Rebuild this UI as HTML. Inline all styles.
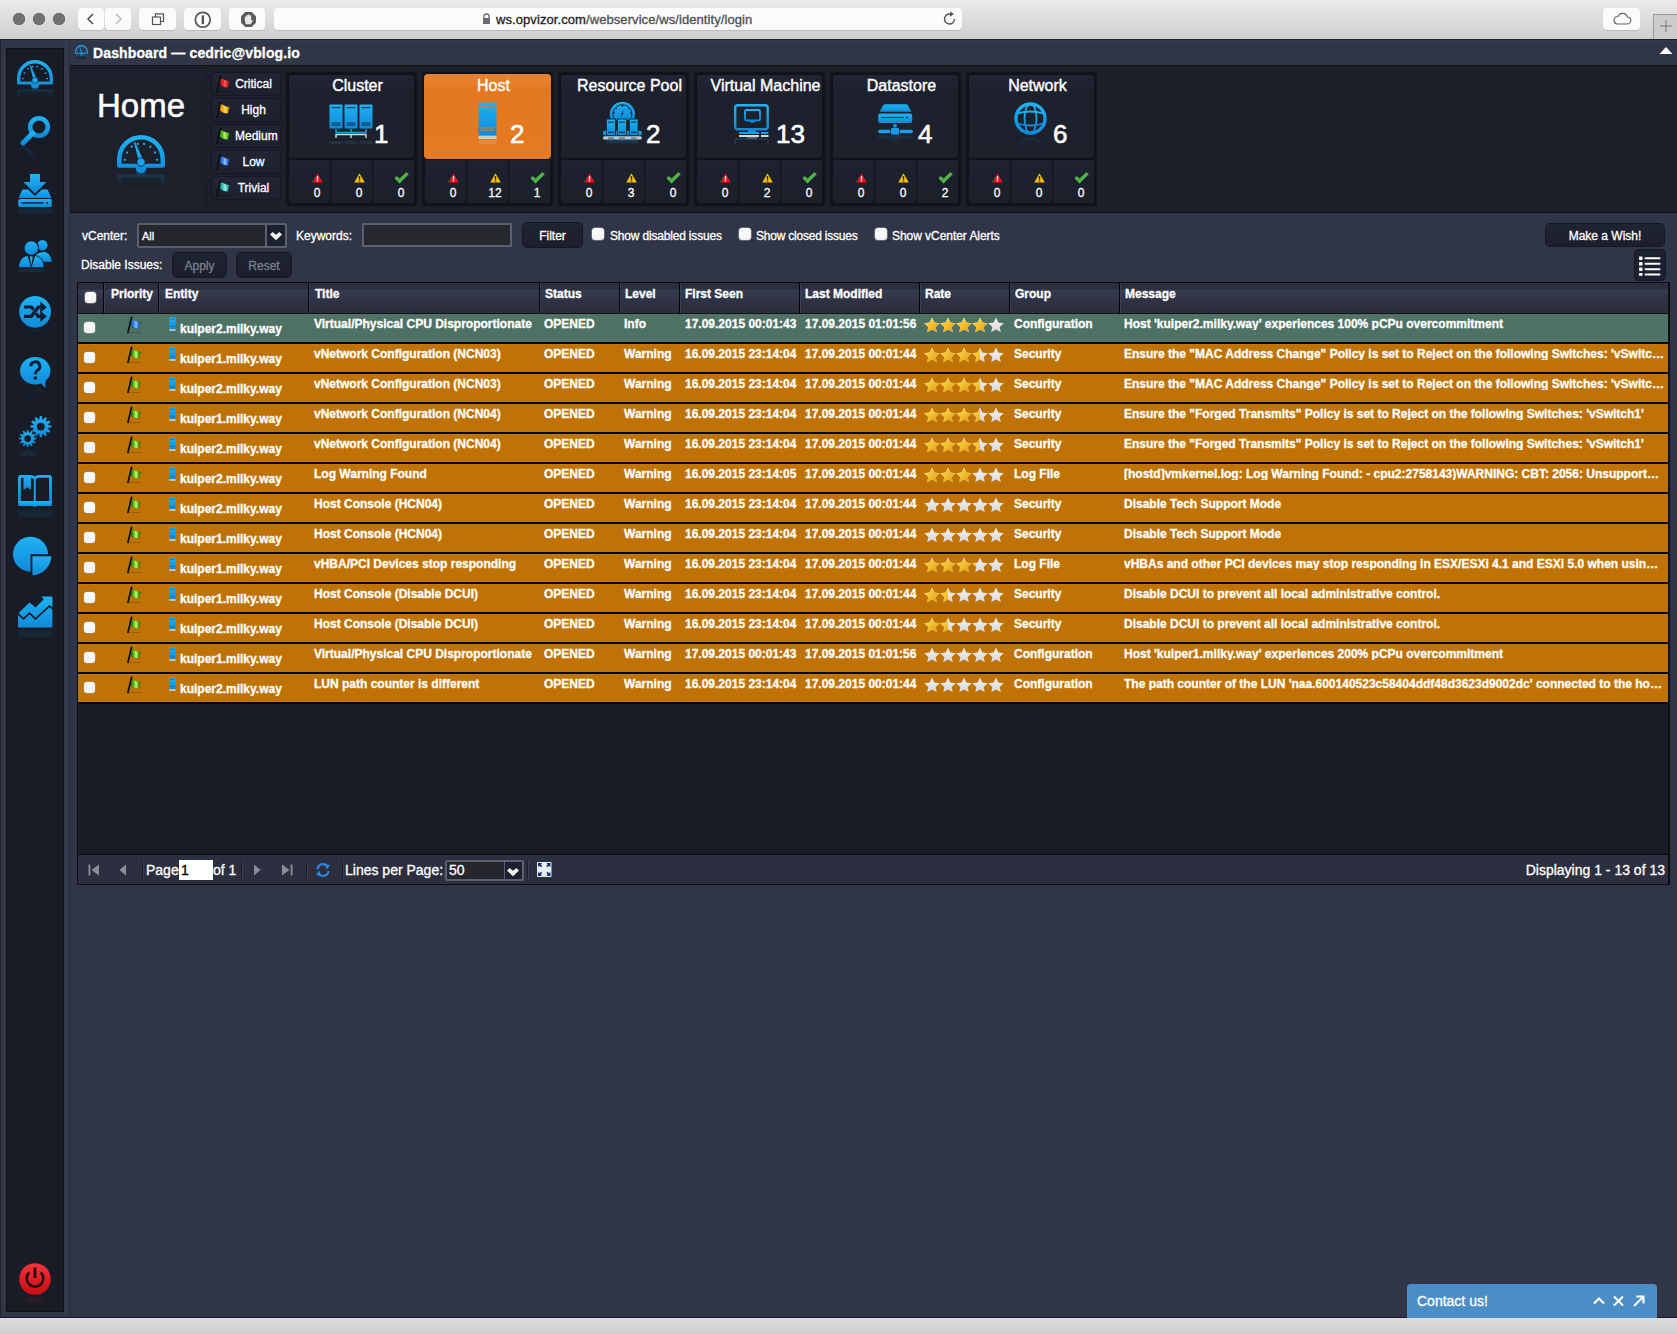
<!DOCTYPE html>
<html><head><meta charset="utf-8"><title>Dashboard</title>
<style>
*{box-sizing:border-box;margin:0;padding:0}
html,body{width:1677px;height:1334px;overflow:hidden}
body{position:relative;background:#303547;font-family:"Liberation Sans",sans-serif;color:#fff}
.a{position:absolute}
svg{position:absolute;overflow:visible}
.t{position:absolute;white-space:nowrap;line-height:1;-webkit-text-stroke:0.3px currentColor}
</style></head><body>
<div class="a" style="left:0;top:0;width:1677px;height:39px;background:linear-gradient(#ebe9eb,#d0cfd0)"></div><div class="a" style="left:13px;top:13px;width:12px;height:12px;border-radius:50%;background:#717073;box-shadow:inset 0 0 0 0.5px #5d5c5f"></div><div class="a" style="left:33px;top:13px;width:12px;height:12px;border-radius:50%;background:#717073;box-shadow:inset 0 0 0 0.5px #5d5c5f"></div><div class="a" style="left:53px;top:13px;width:12px;height:12px;border-radius:50%;background:#717073;box-shadow:inset 0 0 0 0.5px #5d5c5f"></div><div class="a" style="left:78px;top:8px;width:26px;height:22px;border-radius:4px;background:#fbfbfb;box-shadow:0 1px 0 rgba(0,0,0,0.12)"></div><div class="a" style="left:105px;top:8px;width:26px;height:22px;border-radius:4px;background:#fbfbfb;box-shadow:0 1px 0 rgba(0,0,0,0.12)"></div><div class="a" style="left:139px;top:8px;width:37px;height:22px;border-radius:4px;background:#fbfbfb;box-shadow:0 1px 0 rgba(0,0,0,0.12)"></div><div class="a" style="left:184px;top:8px;width:37px;height:22px;border-radius:4px;background:#fbfbfb;box-shadow:0 1px 0 rgba(0,0,0,0.12)"></div><div class="a" style="left:229px;top:8px;width:36px;height:22px;border-radius:4px;background:#fbfbfb;box-shadow:0 1px 0 rgba(0,0,0,0.12)"></div><div class="a" style="left:274px;top:8px;width:688px;height:22px;border-radius:4px;background:#fbfbfb;box-shadow:0 1px 0 rgba(0,0,0,0.12)"></div><div class="a" style="left:1603px;top:8px;width:37px;height:22px;border-radius:4px;background:#fbfbfb;box-shadow:0 1px 0 rgba(0,0,0,0.12)"></div><svg style="left:84px;top:12px" width="14" height="14"><path d="M9 2 L4 7 L9 12" fill="none" stroke="#555" stroke-width="1.6"/></svg><svg style="left:111px;top:12px" width="14" height="14"><path d="M5 2 L10 7 L5 12" fill="none" stroke="#bbb" stroke-width="1.6"/></svg><svg style="left:151px;top:12px" width="16" height="14"><rect x="1.5" y="5" width="8" height="7.5" fill="#fbfbfb" stroke="#555" stroke-width="1.2"/><path d="M4.5 5 V1.8 H12.5 V9.5 H9.5" fill="none" stroke="#555" stroke-width="1.2"/></svg><svg style="left:194px;top:10.5px" width="17.5" height="17.5" viewBox="0 0 16 16"><circle cx="8" cy="8" r="6.8" fill="none" stroke="#555" stroke-width="1.6"/><rect x="7" y="4" width="2.2" height="8" fill="#555"/></svg><svg style="left:239.5px;top:10.5px" width="17" height="17" viewBox="0 0 16 16"><path d="M5 1 H11 L15 5 V11 L11 15 H5 L1 11 V5 Z" fill="#5a5a5a"/><path d="M5.6 12.5 Q4.5 10 4.5 8 V5.5 Q5.3 5 6 5.5 V4 Q6.8 3.4 7.5 4 V3.5 Q8.3 2.9 9 3.5 V4.2 Q9.7 3.7 10.5 4.2 V9 Q11.2 8 12 8.4 Q11.5 11 10 12.5 Z" fill="#e8e8e8"/></svg><svg style="left:482px;top:13px" width="9" height="12"><path d="M2 5 V3.5 A2.5 2.5 0 0 1 7 3.5 V5" fill="none" stroke="#6c6c6c" stroke-width="1.3"/><rect x="1" y="5" width="7" height="6" fill="#6c6c6c"/></svg><div class="t" style="left:496px;top:13px;font-size:13px;letter-spacing:0.08px;color:#1e1e1e">ws.opvizor.com<span style="color:#4d4d4d">/webservice/ws/identity/login</span></div><svg style="left:942px;top:11px" width="16" height="16"><path d="M12.5 8 A5 5 0 1 1 8.5 3.1" fill="none" stroke="#555" stroke-width="1.4"/><path d="M8 0.5 L12 3 L8 5.8 Z" fill="#555"/></svg><svg style="left:1612px;top:12px" width="20" height="14"><path d="M5 12 H15 A3.5 3.5 0 0 0 15.5 5 A5 5 0 0 0 6 4.5 A3.8 3.8 0 0 0 5 12 Z" fill="none" stroke="#666" stroke-width="1.2"/></svg><div class="a" style="left:1653px;top:14px;width:30px;height:25px;background:#cdcccd;border-left:1px solid #9a999a;border-top:1px solid #9a999a"></div><svg style="left:1659px;top:19px" width="14" height="14"><path d="M7 1 V13 M1 7 H13" stroke="#777" stroke-width="1"/></svg><div class="a" style="left:0;top:39px;width:1677px;height:1px;background:#1f2330"></div><div class="a" style="left:0;top:1317px;width:1677px;height:1px;background:#1a1d26"></div><div class="a" style="left:0;top:1318px;width:1677px;height:16px;background:linear-gradient(#dcdcdc,#cfcfcf)"></div><svg width="0" height="0" style="position:absolute;left:0;top:0"><defs>
<linearGradient id="bg" x1="0" y1="0" x2="0" y2="1"><stop offset="0" stop-color="#1fb2f3"/><stop offset="1" stop-color="#108ad9"/></linearGradient>
<linearGradient id="bgr" x1="0" y1="0" x2="0" y2="1"><stop offset="0" stop-color="#1a7fb8" stop-opacity="0.45"/><stop offset="1" stop-color="#1a7fb8" stop-opacity="0"/></linearGradient>
<linearGradient id="rg" x1="0" y1="0" x2="0" y2="1"><stop offset="0" stop-color="#f2333a"/><stop offset="1" stop-color="#c80d14"/></linearGradient>
<linearGradient id="star" x1="0" y1="0" x2="1" y2="1"><stop offset="0" stop-color="#fde256"/><stop offset="0.6" stop-color="#f0b625"/><stop offset="1" stop-color="#e08a10"/></linearGradient>
<linearGradient id="starw" x1="0" y1="0" x2="0" y2="1"><stop offset="0" stop-color="#f4f4f4"/><stop offset="1" stop-color="#d6d6d6"/></linearGradient>
</defs></svg><div class="a" style="left:0;top:40px;width:1px;height:1277px;background:#1e2330"></div><div class="a" style="left:6px;top:48px;width:58px;height:1264px;background:#171c26;border:1px solid #0f1218"></div><svg style="left:17px;top:60px" width="36" height="40.0" viewBox="0 0 36 40"><path d="M0 18 A18 18 0 0 1 36 18 V23 Q36 24.6 34.4 24.6 H22 A4 4 0 0 1 14 24.6 H1.6 Q0 24.6 0 23 Z M3.4 18 A14.6 14.6 0 0 1 32.6 18 V21.6 H3.4 Z" fill="url(#bg)" fill-rule="evenodd"/><g fill="#1fa5ee"><rect x="5.1" y="17.9" width="1.7" height="1.3"/><rect x="29.2" y="17.9" width="1.7" height="1.3"/><rect x="6.7" y="12.4" width="1.6" height="1.5"/><rect x="27.7" y="12.4" width="1.6" height="1.5"/><rect x="10.2" y="8" width="1.6" height="1.5"/><rect x="24.2" y="8" width="1.6" height="1.5"/><rect x="14.9" y="5.9" width="1.6" height="1.5"/><rect x="19.5" y="5.9" width="1.6" height="1.5"/></g><path d="M12.6 5.4 L13.6 5.1 L19.6 18.6 L16.4 19.6 Z" fill="#1fa5ee"/><circle cx="18" cy="20.3" r="3.1" fill="#1fa5ee" stroke="#171c26" stroke-width="0.6"/><linearGradient id="gr17" x1="0" y1="0" x2="0" y2="1"><stop offset="0" stop-color="#1a8fd0" stop-opacity="0.3"/><stop offset="1" stop-color="#1a8fd0" stop-opacity="0"/></linearGradient><path d="M14 29.6 A4 4 0 0 1 22 29.6 H34.4 Q36 29.6 36 31.2 V38 H0 V31.2 Q0 29.6 1.6 29.6 Z" fill="url(#gr17)"/><path d="M3.4 31.6 H32.6 V38 H3.4 Z" fill="#171c26" opacity="0.6"/></svg><svg style="left:19px;top:115px" width="34" height="46" viewBox="0 0 34 46"><circle cx="20" cy="12" r="8.8" fill="none" stroke="url(#bg)" stroke-width="4.6"/><path d="M13.5 18.5 L4 28" stroke="url(#bg)" stroke-width="5.2" stroke-linecap="round"/><path d="M4 31 L13 39" stroke="#1a6fa0" stroke-width="4" stroke-linecap="round" opacity="0.12"/></svg><svg style="left:18px;top:174px" width="34" height="46" viewBox="0 0 34 46"><path d="M12 0 H22 V8 H28.5 L17 19.5 L5.5 8 H12 Z" fill="url(#bg)"/><path d="M4.5 15.5 H10 L17 22 L24 15.5 H29.5 L33.5 24 H0.5 Z" fill="url(#bg)"/><rect x="0.3" y="25" width="33.4" height="8" rx="1.5" fill="url(#bg)"/><rect x="3.5" y="28.2" width="22" height="1.5" fill="#0d2a44"/><rect x="28" y="28.2" width="2" height="1.5" fill="#0d2a44"/><rect x="0.3" y="34.5" width="33.4" height="5" rx="1.5" fill="#1a7fb8" opacity="0.12"/></svg><svg style="left:18px;top:239px" width="35" height="42" viewBox="0 0 35 42"><circle cx="24.4" cy="6.2" r="5.2" fill="url(#bg)"/><path d="M18 15.5 Q22 12.8 26 13 Q32.5 13.5 33.8 22.8 H19 Z" fill="url(#bg)"/><circle cx="13.3" cy="8.9" r="7.3" fill="url(#bg)" stroke="#171c26" stroke-width="1.1"/><path d="M0.2 28.7 Q1 18 9.8 16.2 L13.3 27.5 L16.8 16.2 Q25.6 18 26.4 28.7 Z" fill="url(#bg)" stroke="#171c26" stroke-width="1"/><path d="M11.9 17.2 H14.7 L14.5 20 L13.3 26.5 L12.1 20 Z" fill="#22a8ee"/><path d="M0.2 29.5 H26.4 V33 H0.2 Z" fill="#1a8fd0" opacity="0.12"/></svg><svg style="left:19px;top:296px" width="33" height="44" viewBox="0 0 33 44"><circle cx="16.1" cy="15.8" r="15.9" fill="url(#bg)"/><path d="M5 20.3 H12.3 L19.3 11.2 H22.5" fill="none" stroke="#0c1e30" stroke-width="3.2" stroke-linejoin="miter"/><path d="M21.3 5.6 L27.8 11.2 L21.3 16.8 Z" fill="#0c1e30"/><path d="M14.6 13.6 L12.4 11 H5" fill="none" stroke="#0c1e30" stroke-width="3.2"/><path d="M17 17.6 L19.2 20.3 H22.5" fill="none" stroke="#0c1e30" stroke-width="3.2"/><path d="M21.3 14.7 L27.8 20.3 L21.3 25.9 Z" fill="#0c1e30"/><path d="M5 39 A12 8 0 0 1 27 39" fill="none" stroke="#1a8fd0" stroke-width="3" opacity="0.06"/></svg><svg style="left:20px;top:357px" width="32" height="42" viewBox="0 0 32 42"><ellipse cx="15.2" cy="13.8" rx="15.2" ry="13.8" fill="url(#bg)"/><path d="M20 25 L25.3 31 L25.5 22 Z" fill="#1a8ee0"/><path d="M10.8 9.3 A4.5 4.5 0 1 1 17.2 13.4 Q15.3 14.6 15.3 17.2" fill="none" stroke="#0c1e30" stroke-width="3"/><circle cx="15.3" cy="21.1" r="1.8" fill="#0c1e30"/><path d="M6 39 Q15 32 25 35" fill="none" stroke="#1a8fd0" stroke-width="3" opacity="0.06"/></svg><svg style="left:16px;top:413px" width="38" height="50" viewBox="0 0 38 50"><path d="M32.25 12.10 L35.35 12.60 L35.35 14.60 L32.25 15.10 L32.00 16.02 L34.44 18.01 L33.44 19.74 L30.50 18.63 L29.83 19.30 L30.94 22.24 L29.21 23.24 L27.22 20.80 L26.30 21.05 L25.80 24.15 L23.80 24.15 L23.30 21.05 L22.38 20.80 L20.39 23.24 L18.66 22.24 L19.77 19.30 L19.10 18.63 L16.16 19.74 L15.16 18.01 L17.60 16.02 L17.35 15.10 L14.25 14.60 L14.25 12.60 L17.35 12.10 L17.60 11.18 L15.16 9.19 L16.16 7.46 L19.10 8.57 L19.77 7.90 L18.66 4.96 L20.39 3.96 L22.38 6.40 L23.30 6.15 L23.80 3.05 L25.80 3.05 L26.30 6.15 L27.22 6.40 L29.21 3.96 L30.94 4.96 L29.83 7.90 L30.50 8.57 L33.44 7.46 L34.44 9.19 L32.00 11.18 Z M28.7 13.6 A3.9 3.9 0 1 0 20.900000000000002 13.6 A3.9 3.9 0 1 0 28.7 13.6 Z" fill="url(#bg)" fill-rule="evenodd"/><path d="M18.17 24.30 L20.64 24.57 L20.64 26.63 L18.17 26.90 L17.96 27.71 L19.96 29.17 L18.93 30.97 L16.65 29.96 L16.06 30.55 L17.07 32.83 L15.27 33.86 L13.81 31.86 L13.00 32.07 L12.73 34.54 L10.67 34.54 L10.40 32.07 L9.59 31.86 L8.13 33.86 L6.33 32.83 L7.34 30.55 L6.75 29.96 L4.47 30.97 L3.44 29.17 L5.44 27.71 L5.23 26.90 L2.76 26.63 L2.76 24.57 L5.23 24.30 L5.44 23.49 L3.44 22.03 L4.47 20.23 L6.75 21.24 L7.34 20.65 L6.33 18.37 L8.13 17.34 L9.59 19.34 L10.40 19.13 L10.67 16.66 L12.73 16.66 L13.00 19.13 L13.81 19.34 L15.27 17.34 L17.07 18.37 L16.06 20.65 L16.65 21.24 L18.93 20.23 L19.96 22.03 L17.96 23.49 Z M14.7 25.6 A3.0 3.0 0 1 0 8.7 25.6 A3.0 3.0 0 1 0 14.7 25.6 Z" fill="url(#bg)" fill-rule="evenodd" stroke="#171c26" stroke-width="0.8"/><clipPath id="gclip"><rect x="0" y="35" width="38" height="9"/></clipPath><g clip-path="url(#gclip)" opacity="0.13"><path d="M18.17 24.30 L20.64 24.57 L20.64 26.63 L18.17 26.90 L17.96 27.71 L19.96 29.17 L18.93 30.97 L16.65 29.96 L16.06 30.55 L17.07 32.83 L15.27 33.86 L13.81 31.86 L13.00 32.07 L12.73 34.54 L10.67 34.54 L10.40 32.07 L9.59 31.86 L8.13 33.86 L6.33 32.83 L7.34 30.55 L6.75 29.96 L4.47 30.97 L3.44 29.17 L5.44 27.71 L5.23 26.90 L2.76 26.63 L2.76 24.57 L5.23 24.30 L5.44 23.49 L3.44 22.03 L4.47 20.23 L6.75 21.24 L7.34 20.65 L6.33 18.37 L8.13 17.34 L9.59 19.34 L10.40 19.13 L10.67 16.66 L12.73 16.66 L13.00 19.13 L13.81 19.34 L15.27 17.34 L17.07 18.37 L16.06 20.65 L16.65 21.24 L18.93 20.23 L19.96 22.03 L17.96 23.49 Z M14.7 25.6 A3.0 3.0 0 1 0 8.7 25.6 A3.0 3.0 0 1 0 14.7 25.6 Z" fill="#1a8fd0" fill-rule="evenodd" transform="translate(0,70.6) scale(1,-1)"/></g></svg><svg style="left:18px;top:475px" width="34" height="44" viewBox="0 0 34 44"><path d="M1.4 27 V2.6 Q1.4 1.4 2.6 1.4 H12.5 Q14.8 1.4 16.8 3.2 Q18.8 1.4 21.2 1.4 H31.3 Q32.5 1.4 32.5 2.6 V27" fill="none" stroke="url(#bg)" stroke-width="2.8"/><rect x="15.8" y="2.8" width="2" height="24" fill="#1a9be6"/><path d="M5.5 0.2 H13 V15 L9.25 12.2 L5.5 15 Z" fill="url(#bg)"/><path d="M0.2 26 H33.8 V29.8 Q33.8 31.1 32.5 31.1 H19.5 Q16.8 32.6 14.1 31.1 H1.5 Q0.2 31.1 0.2 29.8 Z" fill="url(#bg)"/><rect x="0.2" y="35" width="33.6" height="7" fill="#1a8fd0" opacity="0.09"/></svg><svg style="left:12px;top:536px" width="42" height="42" viewBox="0 0 42 42"><path d="M18.5 18.2 V35.7 A17.5 17.5 0 1 1 36 18.2 Z" fill="url(#bg)"/><path d="M19.8 19.6 H40 A20.3 20.3 0 0 1 19.8 39.9 Z" fill="url(#bg)" stroke="#171c26" stroke-width="1.2"/></svg><svg style="left:18px;top:596px" width="36" height="44" viewBox="0 0 36 44"><path d="M0 18.3 L0.9 16.8 L11.5 6.4 L17.5 11.4 L25.8 3.3 L23.3 0.5 H33.4 Q34.4 0.5 34.4 1.5 V30.5 Q34.4 31.5 33.4 31.5 H1 Q0 31.5 0 30.5 Z" fill="url(#bg)"/><path d="M-0.5 17.4 L5.5 22.8 L11.5 17.1 L17.5 22.8 L31.4 10.1 L35 13" fill="none" stroke="#171c26" stroke-width="1.7"/><rect x="0" y="34" width="34.4" height="7" fill="#1a8fd0" opacity="0.09"/></svg><svg style="left:19px;top:1263px" width="32" height="44" viewBox="0 0 32 44"><circle cx="16" cy="16" r="15.8" fill="url(#rg)"/><path d="M10.2 9.5 A8.3 8.3 0 1 0 21.8 9.5" fill="none" stroke="#2a0a0c" stroke-width="2.6"/><path d="M16 4.5 V15" stroke="#2a0a0c" stroke-width="2.8"/><ellipse cx="16" cy="37" rx="11" ry="3.5" fill="#b01018" opacity="0.12"/></svg><div class="a" style="left:70px;top:40px;width:1607px;height:25px;background:linear-gradient(#323b4c,#303648 3px,#313749)"></div><div class="a" style="left:64px;top:40px;width:5px;height:1277px;background:#343a4b"></div><div class="a" style="left:69px;top:40px;width:1px;height:1277px;background:#292e3b"></div><svg style="left:75px;top:45px" width="13" height="14.444444444444445" viewBox="0 0 36 40"><path d="M0 18 A18 18 0 0 1 36 18 V23 Q36 24.6 34.4 24.6 H22 A4 4 0 0 1 14 24.6 H1.6 Q0 24.6 0 23 Z M3.4 18 A14.6 14.6 0 0 1 32.6 18 V21.6 H3.4 Z" fill="url(#bg)" fill-rule="evenodd"/><g fill="#1fa5ee"><rect x="5.1" y="17.9" width="1.7" height="1.3"/><rect x="29.2" y="17.9" width="1.7" height="1.3"/><rect x="6.7" y="12.4" width="1.6" height="1.5"/><rect x="27.7" y="12.4" width="1.6" height="1.5"/><rect x="10.2" y="8" width="1.6" height="1.5"/><rect x="24.2" y="8" width="1.6" height="1.5"/><rect x="14.9" y="5.9" width="1.6" height="1.5"/><rect x="19.5" y="5.9" width="1.6" height="1.5"/></g><path d="M12.6 5.4 L13.6 5.1 L19.6 18.6 L16.4 19.6 Z" fill="#1fa5ee"/><circle cx="18" cy="20.3" r="3.1" fill="#1fa5ee" stroke="#171c26" stroke-width="0.6"/><linearGradient id="gr75" x1="0" y1="0" x2="0" y2="1"><stop offset="0" stop-color="#1a8fd0" stop-opacity="0.3"/><stop offset="1" stop-color="#1a8fd0" stop-opacity="0"/></linearGradient><path d="M14 29.6 A4 4 0 0 1 22 29.6 H34.4 Q36 29.6 36 31.2 V38 H0 V31.2 Q0 29.6 1.6 29.6 Z" fill="url(#gr75)"/><path d="M3.4 31.6 H32.6 V38 H3.4 Z" fill="#171c26" opacity="0.6"/></svg><div class="t" style="left:93px;top:46px;font-size:14px;font-weight:bold;letter-spacing:0.13px;color:#fff">Dashboard — cedric@vblog.io</div><svg style="left:1659px;top:46px" width="14" height="9"><path d="M0.5 8 L7 1 L13.5 8 Z" fill="#fff"/></svg><div class="a" style="left:70px;top:65px;width:1607px;height:1px;background:#141519"></div><div class="a" style="left:70px;top:66px;width:1607px;height:147px;background:#1b202a"></div><div class="a" style="left:70px;top:212px;width:1607px;height:1px;background:#121316"></div><div class="a" style="left:71px;top:68px;width:134px;height:143px;border-radius:3px;background:linear-gradient(#1f2330,#1e222e 12px,#1c202b 13px,#1d212c);box-shadow:0 0 0 1px #181b24"></div><div class="t" style="left:97px;top:89px;font-size:33px;color:#fff;-webkit-text-stroke:0.5px #fff">Home</div><svg style="left:117px;top:135px" width="48" height="53.333333333333336" viewBox="0 0 36 40"><path d="M0 18 A18 18 0 0 1 36 18 V23 Q36 24.6 34.4 24.6 H22 A4 4 0 0 1 14 24.6 H1.6 Q0 24.6 0 23 Z M3.4 18 A14.6 14.6 0 0 1 32.6 18 V21.6 H3.4 Z" fill="url(#bg)" fill-rule="evenodd"/><g fill="#1fa5ee"><rect x="5.1" y="17.9" width="1.7" height="1.3"/><rect x="29.2" y="17.9" width="1.7" height="1.3"/><rect x="6.7" y="12.4" width="1.6" height="1.5"/><rect x="27.7" y="12.4" width="1.6" height="1.5"/><rect x="10.2" y="8" width="1.6" height="1.5"/><rect x="24.2" y="8" width="1.6" height="1.5"/><rect x="14.9" y="5.9" width="1.6" height="1.5"/><rect x="19.5" y="5.9" width="1.6" height="1.5"/></g><path d="M12.6 5.4 L13.6 5.1 L19.6 18.6 L16.4 19.6 Z" fill="#1fa5ee"/><circle cx="18" cy="20.3" r="3.1" fill="#1fa5ee" stroke="#171c26" stroke-width="0.6"/><linearGradient id="gr117" x1="0" y1="0" x2="0" y2="1"><stop offset="0" stop-color="#1a8fd0" stop-opacity="0.3"/><stop offset="1" stop-color="#1a8fd0" stop-opacity="0"/></linearGradient><path d="M14 29.6 A4 4 0 0 1 22 29.6 H34.4 Q36 29.6 36 31.2 V38 H0 V31.2 Q0 29.6 1.6 29.6 Z" fill="url(#gr117)"/><path d="M3.4 31.6 H32.6 V38 H3.4 Z" fill="#171c26" opacity="0.6"/></svg><div class="a" style="left:212px;top:73px;width:68px;height:22px;border-radius:4px;background:linear-gradient(#212533,#1d212d);box-shadow:0 0 0 1px #151820"></div><svg style="left:216px;top:76px" width="14" height="16" viewBox="0 0 14 16"><defs><linearGradient id="fl216_76" x1="0" y1="0" x2="1" y2="0"><stop offset="0" stop-color="#a01018"/><stop offset="0.35" stop-color="#e82818"/><stop offset="0.55" stop-color="#ff6a6a"/><stop offset="0.7" stop-color="#e82818"/><stop offset="1" stop-color="#a01018"/></linearGradient></defs><path d="M0 15.6 H14" stroke="#000" stroke-width="1" opacity="0.18"/><path d="M4.6 0.3 L1 15.3" stroke="#0d0f12" stroke-width="1.7" stroke-linecap="round"/><path d="M4.8 1.9 Q7.5 2.8 9.7 4.2 L13.6 5.1 L11.8 11.7 L8 11 Q5.5 10 3.7 8.5 Z" fill="url(#fl216_76)" stroke="#000" stroke-opacity="0.25" stroke-width="0.5"/></svg><div class="t" style="left:230px;top:78px;width:47px;text-align:center;font-size:12px;color:#fff">Critical</div><div class="a" style="left:212px;top:99px;width:68px;height:22px;border-radius:4px;background:linear-gradient(#212533,#1d212d);box-shadow:0 0 0 1px #151820"></div><svg style="left:216px;top:102px" width="14" height="16" viewBox="0 0 14 16"><defs><linearGradient id="fl216_102" x1="0" y1="0" x2="1" y2="0"><stop offset="0" stop-color="#d07a00"/><stop offset="0.35" stop-color="#ffb400"/><stop offset="0.55" stop-color="#ffe080"/><stop offset="0.7" stop-color="#ffb400"/><stop offset="1" stop-color="#d07a00"/></linearGradient></defs><path d="M0 15.6 H14" stroke="#000" stroke-width="1" opacity="0.18"/><path d="M4.6 0.3 L1 15.3" stroke="#0d0f12" stroke-width="1.7" stroke-linecap="round"/><path d="M4.8 1.9 Q7.5 2.8 9.7 4.2 L13.6 5.1 L11.8 11.7 L8 11 Q5.5 10 3.7 8.5 Z" fill="url(#fl216_102)" stroke="#000" stroke-opacity="0.25" stroke-width="0.5"/></svg><div class="t" style="left:230px;top:104px;width:47px;text-align:center;font-size:12px;color:#fff">High</div><div class="a" style="left:212px;top:125px;width:68px;height:22px;border-radius:4px;background:linear-gradient(#212533,#1d212d);box-shadow:0 0 0 1px #151820"></div><svg style="left:216px;top:128px" width="14" height="16" viewBox="0 0 14 16"><defs><linearGradient id="fl216_128" x1="0" y1="0" x2="1" y2="0"><stop offset="0" stop-color="#2c8a10"/><stop offset="0.35" stop-color="#70d020"/><stop offset="0.55" stop-color="#b8f080"/><stop offset="0.7" stop-color="#70d020"/><stop offset="1" stop-color="#2c8a10"/></linearGradient></defs><path d="M0 15.6 H14" stroke="#000" stroke-width="1" opacity="0.18"/><path d="M4.6 0.3 L1 15.3" stroke="#0d0f12" stroke-width="1.7" stroke-linecap="round"/><path d="M4.8 1.9 Q7.5 2.8 9.7 4.2 L13.6 5.1 L11.8 11.7 L8 11 Q5.5 10 3.7 8.5 Z" fill="url(#fl216_128)" stroke="#000" stroke-opacity="0.25" stroke-width="0.5"/></svg><div class="t" style="left:235px;top:130px;font-size:12px;color:#fff">Medium</div><div class="a" style="left:212px;top:151px;width:68px;height:22px;border-radius:4px;background:linear-gradient(#212533,#1d212d);box-shadow:0 0 0 1px #151820"></div><svg style="left:216px;top:154px" width="14" height="16" viewBox="0 0 14 16"><defs><linearGradient id="fl216_154" x1="0" y1="0" x2="1" y2="0"><stop offset="0" stop-color="#1a4cb0"/><stop offset="0.35" stop-color="#3a8af0"/><stop offset="0.55" stop-color="#90c8ff"/><stop offset="0.7" stop-color="#3a8af0"/><stop offset="1" stop-color="#1a4cb0"/></linearGradient></defs><path d="M0 15.6 H14" stroke="#000" stroke-width="1" opacity="0.18"/><path d="M4.6 0.3 L1 15.3" stroke="#0d0f12" stroke-width="1.7" stroke-linecap="round"/><path d="M4.8 1.9 Q7.5 2.8 9.7 4.2 L13.6 5.1 L11.8 11.7 L8 11 Q5.5 10 3.7 8.5 Z" fill="url(#fl216_154)" stroke="#000" stroke-opacity="0.25" stroke-width="0.5"/></svg><div class="t" style="left:230px;top:156px;width:47px;text-align:center;font-size:12px;color:#fff">Low</div><div class="a" style="left:212px;top:177px;width:68px;height:22px;border-radius:4px;background:linear-gradient(#212533,#1d212d);box-shadow:0 0 0 1px #151820"></div><svg style="left:216px;top:180px" width="14" height="16" viewBox="0 0 14 16"><defs><linearGradient id="fl216_180" x1="0" y1="0" x2="1" y2="0"><stop offset="0" stop-color="#108080"/><stop offset="0.35" stop-color="#40d0c8"/><stop offset="0.55" stop-color="#a0f0f0"/><stop offset="0.7" stop-color="#40d0c8"/><stop offset="1" stop-color="#108080"/></linearGradient></defs><path d="M0 15.6 H14" stroke="#000" stroke-width="1" opacity="0.18"/><path d="M4.6 0.3 L1 15.3" stroke="#0d0f12" stroke-width="1.7" stroke-linecap="round"/><path d="M4.8 1.9 Q7.5 2.8 9.7 4.2 L13.6 5.1 L11.8 11.7 L8 11 Q5.5 10 3.7 8.5 Z" fill="url(#fl216_180)" stroke="#000" stroke-opacity="0.25" stroke-width="0.5"/></svg><div class="t" style="left:230px;top:182px;width:47px;text-align:center;font-size:12px;color:#fff">Trivial</div><div class="a" style="left:286px;top:72px;width:131px;height:134px;background:#10131a;border-radius:2px"></div><div class="a" style="left:289px;top:75px;width:125px;height:83px;border-radius:3px;background:linear-gradient(#212533,#1f2330 13px,#1d212d 14px,#1d212c)"></div><div class="t" style="left:292px;top:78px;width:131px;text-align:center;font-size:16px;color:#fff;-webkit-text-stroke:0.4px #fff">Cluster</div><svg style="left:329px;top:104px" width="44" height="44" viewBox="0 0 44 44"><g fill="url(#bg)"><rect x="0.5" y="0.5" width="13" height="24" rx="1"/><rect x="15.5" y="0.5" width="13" height="24" rx="1"/><rect x="30.5" y="0.5" width="13" height="24" rx="1"/></g><g fill="#0f3a5c"><rect x="2.5" y="3" width="9" height="1.2"/><rect x="17.5" y="3" width="9" height="1.2"/><rect x="32.5" y="3" width="9" height="1.2"/><rect x="2.5" y="18.5" width="9" height="1.2"/><rect x="17.5" y="18.5" width="9" height="1.2"/><rect x="32.5" y="18.5" width="9" height="1.2"/><rect x="2.5" y="20.5" width="9" height="1.2"/><rect x="17.5" y="20.5" width="9" height="1.2"/><rect x="32.5" y="20.5" width="9" height="1.2"/></g><path d="M7 25 V28.5 H37 V25 M22 25 V28.5" fill="none" stroke="#1a9de6" stroke-width="1.4"/><path d="M7 34 V30.5 H37 V34 M22 30.5 V34" fill="none" stroke="#c9dde6" stroke-width="1.4"/><g fill="#2a3a48" opacity="0.6"><rect x="0.5" y="37" width="13" height="3"/><rect x="15.5" y="37" width="13" height="3"/><rect x="30.5" y="37" width="13" height="3"/></g></svg><div class="t" style="left:374px;top:121px;font-size:26px;color:#fff;-webkit-text-stroke:0.6px #fff">1</div><div class="a" style="left:289px;top:160px;width:41px;height:43px;border-radius:3px;background:linear-gradient(#1f2330,#1d212d 12px,#1c202b)"></div><svg style="left:312px;top:173px" width="11" height="10" viewBox="0 0 11 10"><path d="M5.5 0.3 L10.8 9.6 H0.2 Z" fill="#e8141a"/><rect x="4.8" y="3" width="1.4" height="3.6" fill="#fff"/><rect x="4.8" y="7.3" width="1.4" height="1.3" fill="#fff"/></svg><div class="t" style="left:297px;top:187px;width:40px;text-align:center;font-size:12px;color:#fff">0</div><div class="a" style="left:331px;top:160px;width:41px;height:43px;border-radius:3px;background:linear-gradient(#1f2330,#1d212d 12px,#1c202b)"></div><svg style="left:354px;top:173px" width="11" height="10" viewBox="0 0 11 10"><path d="M5.5 0.3 L10.8 9.6 H0.2 Z" fill="#f5c000"/><rect x="4.8" y="3" width="1.4" height="3.6" fill="#222"/><rect x="4.8" y="7.3" width="1.4" height="1.3" fill="#222"/></svg><div class="t" style="left:339px;top:187px;width:40px;text-align:center;font-size:12px;color:#fff">0</div><div class="a" style="left:373px;top:160px;width:41px;height:43px;border-radius:3px;background:linear-gradient(#1f2330,#1d212d 12px,#1c202b)"></div><svg style="left:394px;top:172px" width="15" height="12" viewBox="0 0 15 12"><path d="M0.5 6.2 L2.8 4 L5.5 6.6 L12.5 0 L14.8 2.2 L5.5 11.5 Z" fill="#4fb24a"/></svg><div class="t" style="left:381px;top:187px;width:40px;text-align:center;font-size:12px;color:#fff">0</div><div class="a" style="left:422px;top:72px;width:131px;height:134px;background:#10131a;border-radius:2px"></div><div class="a" style="left:424px;top:74px;width:127px;height:85px;border-radius:4px;background:linear-gradient(#e8812f,#e67e29 12px,#e37820 13px,#e57a24)"></div><div class="t" style="left:428px;top:78px;width:131px;text-align:center;font-size:16px;color:#fff;-webkit-text-stroke:0.4px #fff">Host</div><svg style="left:478px;top:102px" width="19" height="44" viewBox="0 0 19 44"><rect x="0.5" y="0.5" width="18" height="32.5" rx="1" fill="url(#bg)"/><g fill="#e57a24"><rect x="2.5" y="4.3" width="14" height="1.5"/><rect x="2.5" y="25.5" width="14" height="1"/><rect x="2.5" y="27.7" width="14" height="1"/></g><rect x="0.5" y="34" width="18" height="3" fill="#bfe6f0" opacity="0.8"/><rect x="2.5" y="37" width="14" height="1" fill="#e57a24"/><rect x="0.5" y="38" width="18" height="4" fill="#f0a060" opacity="0.4"/></svg><div class="t" style="left:510px;top:121px;font-size:26px;color:#fff;-webkit-text-stroke:0.6px #fff">2</div><div class="a" style="left:425px;top:160px;width:41px;height:43px;border-radius:3px;background:linear-gradient(#1f2330,#1d212d 12px,#1c202b)"></div><svg style="left:448px;top:173px" width="11" height="10" viewBox="0 0 11 10"><path d="M5.5 0.3 L10.8 9.6 H0.2 Z" fill="#e8141a"/><rect x="4.8" y="3" width="1.4" height="3.6" fill="#fff"/><rect x="4.8" y="7.3" width="1.4" height="1.3" fill="#fff"/></svg><div class="t" style="left:433px;top:187px;width:40px;text-align:center;font-size:12px;color:#fff">0</div><div class="a" style="left:467px;top:160px;width:41px;height:43px;border-radius:3px;background:linear-gradient(#1f2330,#1d212d 12px,#1c202b)"></div><svg style="left:490px;top:173px" width="11" height="10" viewBox="0 0 11 10"><path d="M5.5 0.3 L10.8 9.6 H0.2 Z" fill="#f5c000"/><rect x="4.8" y="3" width="1.4" height="3.6" fill="#222"/><rect x="4.8" y="7.3" width="1.4" height="1.3" fill="#222"/></svg><div class="t" style="left:475px;top:187px;width:40px;text-align:center;font-size:12px;color:#fff">12</div><div class="a" style="left:509px;top:160px;width:41px;height:43px;border-radius:3px;background:linear-gradient(#1f2330,#1d212d 12px,#1c202b)"></div><svg style="left:530px;top:172px" width="15" height="12" viewBox="0 0 15 12"><path d="M0.5 6.2 L2.8 4 L5.5 6.6 L12.5 0 L14.8 2.2 L5.5 11.5 Z" fill="#4fb24a"/></svg><div class="t" style="left:517px;top:187px;width:40px;text-align:center;font-size:12px;color:#fff">1</div><div class="a" style="left:558px;top:72px;width:131px;height:134px;background:#10131a;border-radius:2px"></div><div class="a" style="left:561px;top:75px;width:125px;height:83px;border-radius:3px;background:linear-gradient(#212533,#1f2330 13px,#1d212d 14px,#1d212c)"></div><div class="t" style="left:564px;top:78px;width:131px;text-align:center;font-size:16px;color:#fff;-webkit-text-stroke:0.4px #fff">Resource Pool</div><svg style="left:603px;top:101px" width="40" height="48" viewBox="0 0 40 48"><path d="M8 19 A12.7 12.7 0 1 1 30.8 19 Z" fill="url(#bg)"/><path d="M10.5 16.6 A9.5 9.5 0 1 1 28.3 16.6" fill="none" stroke="#0c2236" stroke-width="1"/><g stroke="#0c2236" stroke-width="1"><path d="M19.4 4 V6"/><path d="M12.7 6.7 L14 8"/><path d="M26.1 6.7 L24.8 8"/><path d="M10 11.5 L11.8 12"/><path d="M28.8 11.5 L27 12"/></g><path d="M22 7.5 L19.5 12 L20.5 12.5 L17 17 L19 13.5 L18 13 Z" fill="#0c2236"/><rect x="0" y="29.8" width="38.8" height="4.6" rx="2.2" fill="url(#bg)"/><g fill="url(#bg)" stroke="#1b202a" stroke-width="0.9"><rect x="3.3" y="18" width="9.2" height="16.4"/><rect x="14.3" y="18" width="9.4" height="16.4"/><rect x="26.3" y="18" width="8.8" height="16.4"/></g><g fill="#0c3050"><rect x="5" y="20.6" width="5.8" height="1.1"/><rect x="16" y="20.6" width="6" height="1.1"/><rect x="28" y="20.6" width="5.4" height="1.1"/><rect x="5" y="30.8" width="5.8" height="1.1"/><rect x="16" y="30.8" width="6" height="1.1"/><rect x="28" y="30.8" width="5.4" height="1.1"/></g><rect x="0" y="35.2" width="38.8" height="3.4" rx="1.5" fill="#cfeaf2" opacity="0.85"/><g fill="#3a5060"><rect x="5" y="36.6" width="5.8" height="1"/><rect x="16" y="36.6" width="6" height="1"/><rect x="28" y="36.6" width="5.4" height="1"/></g><rect x="3.3" y="38.6" width="31.8" height="5" fill="url(#bgr)" opacity="0.8"/></svg><div class="t" style="left:646px;top:121px;font-size:26px;color:#fff;-webkit-text-stroke:0.6px #fff">2</div><div class="a" style="left:561px;top:160px;width:41px;height:43px;border-radius:3px;background:linear-gradient(#1f2330,#1d212d 12px,#1c202b)"></div><svg style="left:584px;top:173px" width="11" height="10" viewBox="0 0 11 10"><path d="M5.5 0.3 L10.8 9.6 H0.2 Z" fill="#e8141a"/><rect x="4.8" y="3" width="1.4" height="3.6" fill="#fff"/><rect x="4.8" y="7.3" width="1.4" height="1.3" fill="#fff"/></svg><div class="t" style="left:569px;top:187px;width:40px;text-align:center;font-size:12px;color:#fff">0</div><div class="a" style="left:603px;top:160px;width:41px;height:43px;border-radius:3px;background:linear-gradient(#1f2330,#1d212d 12px,#1c202b)"></div><svg style="left:626px;top:173px" width="11" height="10" viewBox="0 0 11 10"><path d="M5.5 0.3 L10.8 9.6 H0.2 Z" fill="#f5c000"/><rect x="4.8" y="3" width="1.4" height="3.6" fill="#222"/><rect x="4.8" y="7.3" width="1.4" height="1.3" fill="#222"/></svg><div class="t" style="left:611px;top:187px;width:40px;text-align:center;font-size:12px;color:#fff">3</div><div class="a" style="left:645px;top:160px;width:41px;height:43px;border-radius:3px;background:linear-gradient(#1f2330,#1d212d 12px,#1c202b)"></div><svg style="left:666px;top:172px" width="15" height="12" viewBox="0 0 15 12"><path d="M0.5 6.2 L2.8 4 L5.5 6.6 L12.5 0 L14.8 2.2 L5.5 11.5 Z" fill="#4fb24a"/></svg><div class="t" style="left:653px;top:187px;width:40px;text-align:center;font-size:12px;color:#fff">0</div><div class="a" style="left:694px;top:72px;width:131px;height:134px;background:#10131a;border-radius:2px"></div><div class="a" style="left:697px;top:75px;width:125px;height:83px;border-radius:3px;background:linear-gradient(#212533,#1f2330 13px,#1d212d 14px,#1d212c)"></div><div class="t" style="left:700px;top:78px;width:131px;text-align:center;font-size:16px;color:#fff;-webkit-text-stroke:0.4px #fff">Virtual Machine</div><svg style="left:734px;top:104px" width="36" height="42" viewBox="0 0 36 42"><rect x="1.2" y="1.2" width="32.5" height="24" rx="2.5" fill="none" stroke="url(#bg)" stroke-width="2.4"/><rect x="11" y="6" width="15" height="10.5" rx="1.5" fill="none" stroke="url(#bg)" stroke-width="1.8"/><rect x="16.5" y="17" width="4" height="1.5" fill="#1a9de6"/><rect x="14" y="26" width="8" height="2" fill="#1a8ad9"/><rect x="5" y="28" width="20" height="2" fill="#1a9de6"/><rect x="27" y="28" width="7.5" height="2" fill="#1a9de6"/><rect x="5" y="31" width="20" height="2" fill="#c9dde6"/><rect x="27" y="31" width="7.5" height="2" fill="#c9dde6"/><rect x="13" y="33.5" width="10" height="1" fill="#9ab"/><path d="M1 40 V37 Q1 35 3 35 H32 Q34 35 34 37 V40" fill="none" stroke="#3a4a58" stroke-width="1.5" opacity="0.6"/></svg><div class="t" style="left:776px;top:121px;font-size:26px;color:#fff;-webkit-text-stroke:0.6px #fff">13</div><div class="a" style="left:697px;top:160px;width:41px;height:43px;border-radius:3px;background:linear-gradient(#1f2330,#1d212d 12px,#1c202b)"></div><svg style="left:720px;top:173px" width="11" height="10" viewBox="0 0 11 10"><path d="M5.5 0.3 L10.8 9.6 H0.2 Z" fill="#e8141a"/><rect x="4.8" y="3" width="1.4" height="3.6" fill="#fff"/><rect x="4.8" y="7.3" width="1.4" height="1.3" fill="#fff"/></svg><div class="t" style="left:705px;top:187px;width:40px;text-align:center;font-size:12px;color:#fff">0</div><div class="a" style="left:739px;top:160px;width:41px;height:43px;border-radius:3px;background:linear-gradient(#1f2330,#1d212d 12px,#1c202b)"></div><svg style="left:762px;top:173px" width="11" height="10" viewBox="0 0 11 10"><path d="M5.5 0.3 L10.8 9.6 H0.2 Z" fill="#f5c000"/><rect x="4.8" y="3" width="1.4" height="3.6" fill="#222"/><rect x="4.8" y="7.3" width="1.4" height="1.3" fill="#222"/></svg><div class="t" style="left:747px;top:187px;width:40px;text-align:center;font-size:12px;color:#fff">2</div><div class="a" style="left:781px;top:160px;width:41px;height:43px;border-radius:3px;background:linear-gradient(#1f2330,#1d212d 12px,#1c202b)"></div><svg style="left:802px;top:172px" width="15" height="12" viewBox="0 0 15 12"><path d="M0.5 6.2 L2.8 4 L5.5 6.6 L12.5 0 L14.8 2.2 L5.5 11.5 Z" fill="#4fb24a"/></svg><div class="t" style="left:789px;top:187px;width:40px;text-align:center;font-size:12px;color:#fff">0</div><div class="a" style="left:830px;top:72px;width:131px;height:134px;background:#10131a;border-radius:2px"></div><div class="a" style="left:833px;top:75px;width:125px;height:83px;border-radius:3px;background:linear-gradient(#212533,#1f2330 13px,#1d212d 14px,#1d212c)"></div><div class="t" style="left:836px;top:78px;width:131px;text-align:center;font-size:16px;color:#fff;-webkit-text-stroke:0.4px #fff">Datastore</div><svg style="left:878px;top:104px" width="35" height="44" viewBox="0 0 35 44"><path d="M7.5 0.2 H27.5 Q29 0.2 30 1.5 L33.5 7.8 H1.5 L5 1.5 Q6 0.2 7.5 0.2 Z" fill="url(#bg)"/><rect x="0.2" y="9.4" width="34" height="9.5" rx="2" fill="url(#bg)"/><rect x="3" y="12.9" width="23" height="1.2" rx="0.6" fill="#0c2236"/><rect x="28" y="12.9" width="2" height="1.2" fill="#0c2236"/><rect x="15.3" y="20.2" width="3.4" height="3.3" rx="1" fill="#1aa0ea"/><rect x="13" y="24" width="8" height="6.6" rx="1.2" fill="#1a9be6"/><rect x="0" y="25.8" width="12.5" height="3.4" rx="1.7" fill="#1aa0ea"/><rect x="21.5" y="25.8" width="13.5" height="3.4" rx="1.7" fill="#1aa0ea"/><g fill="#1a6fa0" opacity="0.18"><rect x="0" y="31.5" width="35" height="3" rx="1.5"/><rect x="13" y="31" width="8" height="5"/></g></svg><div class="t" style="left:918px;top:121px;font-size:26px;color:#fff;-webkit-text-stroke:0.6px #fff">4</div><div class="a" style="left:833px;top:160px;width:41px;height:43px;border-radius:3px;background:linear-gradient(#1f2330,#1d212d 12px,#1c202b)"></div><svg style="left:856px;top:173px" width="11" height="10" viewBox="0 0 11 10"><path d="M5.5 0.3 L10.8 9.6 H0.2 Z" fill="#e8141a"/><rect x="4.8" y="3" width="1.4" height="3.6" fill="#fff"/><rect x="4.8" y="7.3" width="1.4" height="1.3" fill="#fff"/></svg><div class="t" style="left:841px;top:187px;width:40px;text-align:center;font-size:12px;color:#fff">0</div><div class="a" style="left:875px;top:160px;width:41px;height:43px;border-radius:3px;background:linear-gradient(#1f2330,#1d212d 12px,#1c202b)"></div><svg style="left:898px;top:173px" width="11" height="10" viewBox="0 0 11 10"><path d="M5.5 0.3 L10.8 9.6 H0.2 Z" fill="#f5c000"/><rect x="4.8" y="3" width="1.4" height="3.6" fill="#222"/><rect x="4.8" y="7.3" width="1.4" height="1.3" fill="#222"/></svg><div class="t" style="left:883px;top:187px;width:40px;text-align:center;font-size:12px;color:#fff">0</div><div class="a" style="left:917px;top:160px;width:41px;height:43px;border-radius:3px;background:linear-gradient(#1f2330,#1d212d 12px,#1c202b)"></div><svg style="left:938px;top:172px" width="15" height="12" viewBox="0 0 15 12"><path d="M0.5 6.2 L2.8 4 L5.5 6.6 L12.5 0 L14.8 2.2 L5.5 11.5 Z" fill="#4fb24a"/></svg><div class="t" style="left:925px;top:187px;width:40px;text-align:center;font-size:12px;color:#fff">2</div><div class="a" style="left:966px;top:72px;width:131px;height:134px;background:#10131a;border-radius:2px"></div><div class="a" style="left:969px;top:75px;width:125px;height:83px;border-radius:3px;background:linear-gradient(#212533,#1f2330 13px,#1d212d 14px,#1d212c)"></div><div class="t" style="left:972px;top:78px;width:131px;text-align:center;font-size:16px;color:#fff;-webkit-text-stroke:0.4px #fff">Network</div><svg style="left:1014px;top:102px" width="34" height="46" viewBox="0 0 34 46"><circle cx="16.5" cy="16.5" r="14.5" fill="none" stroke="url(#bg)" stroke-width="3.4"/><ellipse cx="16.5" cy="16.5" rx="6" ry="14.5" fill="none" stroke="url(#bg)" stroke-width="1.8"/><path d="M3.5 11.5 Q16.5 7.5 29.5 11.5 M3.5 21.5 Q16.5 25.5 29.5 21.5" fill="none" stroke="url(#bg)" stroke-width="1.8"/><path d="M5 44 A12 10 0 0 1 28 44" fill="none" stroke="#1a6fa0" stroke-width="2.5" opacity="0.13"/></svg><div class="t" style="left:1053px;top:121px;font-size:26px;color:#fff;-webkit-text-stroke:0.6px #fff">6</div><div class="a" style="left:969px;top:160px;width:41px;height:43px;border-radius:3px;background:linear-gradient(#1f2330,#1d212d 12px,#1c202b)"></div><svg style="left:992px;top:173px" width="11" height="10" viewBox="0 0 11 10"><path d="M5.5 0.3 L10.8 9.6 H0.2 Z" fill="#e8141a"/><rect x="4.8" y="3" width="1.4" height="3.6" fill="#fff"/><rect x="4.8" y="7.3" width="1.4" height="1.3" fill="#fff"/></svg><div class="t" style="left:977px;top:187px;width:40px;text-align:center;font-size:12px;color:#fff">0</div><div class="a" style="left:1011px;top:160px;width:41px;height:43px;border-radius:3px;background:linear-gradient(#1f2330,#1d212d 12px,#1c202b)"></div><svg style="left:1034px;top:173px" width="11" height="10" viewBox="0 0 11 10"><path d="M5.5 0.3 L10.8 9.6 H0.2 Z" fill="#f5c000"/><rect x="4.8" y="3" width="1.4" height="3.6" fill="#222"/><rect x="4.8" y="7.3" width="1.4" height="1.3" fill="#222"/></svg><div class="t" style="left:1019px;top:187px;width:40px;text-align:center;font-size:12px;color:#fff">0</div><div class="a" style="left:1053px;top:160px;width:41px;height:43px;border-radius:3px;background:linear-gradient(#1f2330,#1d212d 12px,#1c202b)"></div><svg style="left:1074px;top:172px" width="15" height="12" viewBox="0 0 15 12"><path d="M0.5 6.2 L2.8 4 L5.5 6.6 L12.5 0 L14.8 2.2 L5.5 11.5 Z" fill="#4fb24a"/></svg><div class="t" style="left:1061px;top:187px;width:40px;text-align:center;font-size:12px;color:#fff">0</div><div class="t" style="left:82px;top:230px;font-size:12px;color:#fff;">vCenter:</div><div class="a" style="left:137px;top:223px;width:150px;height:25px;background:#5b6070;border-radius:2px"></div><div class="a" style="left:139px;top:225px;width:126px;height:21px;background:#26272c"></div><div class="a" style="left:267px;top:225px;width:18px;height:21px;background:#1c2130"></div><svg style="left:270px;top:232px" width="12" height="9" viewBox="0 0 12 9"><path d="M0 2.6 L2.6 0 L6 2.8 L9.4 0 L12 2.6 L6 8.3 Z" fill="#f0f0f0"/></svg><div class="t" style="left:142px;top:231px;font-size:11px;color:#fff;">All</div><div class="t" style="left:296px;top:230px;font-size:12px;color:#fff;">Keywords:</div><div class="a" style="left:362px;top:223px;width:150px;height:24px;background:#5b6070"></div><div class="a" style="left:364px;top:225px;width:146px;height:20px;background:#27282d"></div><div class="a" style="left:523px;top:223px;width:59px;height:24px;border-radius:4px;background:linear-gradient(#1f2433,#1b1f2d);box-shadow:0 0 0 1px #151821"></div><div class="t" style="left:523px;top:229.5px;width:59px;text-align:center;font-size:12px;color:#fff">Filter</div><div class="a" style="left:592px;top:228px;width:12px;height:12px;border-radius:3px;background:linear-gradient(#fff,#f0f0f0);box-shadow:0 0 0 0.5px #999"></div><div class="t" style="left:610px;top:230px;font-size:12px;color:#fff;letter-spacing:-0.18px;">Show disabled issues</div><div class="a" style="left:739px;top:228px;width:12px;height:12px;border-radius:3px;background:linear-gradient(#fff,#f0f0f0);box-shadow:0 0 0 0.5px #999"></div><div class="t" style="left:756px;top:230px;font-size:12px;color:#fff;letter-spacing:-0.22px;">Show closed issues</div><div class="a" style="left:875px;top:228px;width:12px;height:12px;border-radius:3px;background:linear-gradient(#fff,#f0f0f0);box-shadow:0 0 0 0.5px #999"></div><div class="t" style="left:892px;top:230px;font-size:12px;color:#fff;letter-spacing:-0.05px;">Show vCenter Alerts</div><div class="a" style="left:1546px;top:224px;width:118px;height:22px;border-radius:4px;background:linear-gradient(#1f2433,#1b1f2d);box-shadow:0 0 0 1px #151821"></div><div class="t" style="left:1546px;top:229.5px;width:118px;text-align:center;font-size:12px;color:#fff">Make a Wish!</div><div class="t" style="left:81px;top:259px;font-size:12px;color:#fff;">Disable Issues:</div><div class="a" style="left:173px;top:253px;width:53px;height:24px;border-radius:4px;background:linear-gradient(#1f2433,#1b1f2d);box-shadow:0 0 0 1px #151821"></div><div class="t" style="left:173px;top:259.5px;width:53px;text-align:center;font-size:12px;color:#7c808e">Apply</div><div class="a" style="left:237px;top:253px;width:54px;height:24px;border-radius:4px;background:linear-gradient(#1f2433,#1b1f2d);box-shadow:0 0 0 1px #151821"></div><div class="t" style="left:237px;top:259.5px;width:54px;text-align:center;font-size:12px;color:#7c808e">Reset</div><div class="a" style="left:1635px;top:250px;width:30px;height:30px;border-radius:4px;background:#1c2130;box-shadow:0 0 0 1px #151821"></div><svg style="left:1637px;top:254px" width="26" height="22" viewBox="0 0 26 22"><g fill="#fff"><rect x="2" y="2.5" width="3.5" height="3.5" rx="0.6"/><rect x="2" y="8" width="3.5" height="3.5" rx="0.6"/><rect x="2" y="13.5" width="3.5" height="3.5" rx="0.6"/><rect x="2" y="19" width="3.5" height="2.8" rx="0.6"/><rect x="7.5" y="3.2" width="16" height="2" rx="1"/><rect x="7.5" y="8.7" width="16" height="2" rx="1"/><rect x="7.5" y="14.2" width="16" height="2" rx="1"/><rect x="7.5" y="19.5" width="16" height="2" rx="1"/></g></svg><div class="a" style="left:77px;top:282px;width:1593px;height:603px;background:#181d27;border:1px solid #0c0e12;border-right-width:2px"></div><div class="a" style="left:78px;top:283px;width:1590px;height:30px;background:linear-gradient(#2b2e3d 0px,#2b2e3d 6px,#363c52 7px,#2e3244 18px,#2a2e3c 30px)"></div><div class="a" style="left:78px;top:313px;width:1590px;height:1px;background:#101218"></div><div class="a" style="left:103px;top:283px;width:1px;height:30px;background:#050608"></div><div class="a" style="left:104px;top:283px;width:1px;height:30px;background:#3a3f52"></div><div class="a" style="left:158px;top:283px;width:1px;height:30px;background:#050608"></div><div class="a" style="left:159px;top:283px;width:1px;height:30px;background:#3a3f52"></div><div class="a" style="left:308px;top:283px;width:1px;height:30px;background:#050608"></div><div class="a" style="left:309px;top:283px;width:1px;height:30px;background:#3a3f52"></div><div class="a" style="left:539px;top:283px;width:1px;height:30px;background:#050608"></div><div class="a" style="left:540px;top:283px;width:1px;height:30px;background:#3a3f52"></div><div class="a" style="left:619px;top:283px;width:1px;height:30px;background:#050608"></div><div class="a" style="left:620px;top:283px;width:1px;height:30px;background:#3a3f52"></div><div class="a" style="left:679px;top:283px;width:1px;height:30px;background:#050608"></div><div class="a" style="left:680px;top:283px;width:1px;height:30px;background:#3a3f52"></div><div class="a" style="left:799px;top:283px;width:1px;height:30px;background:#050608"></div><div class="a" style="left:800px;top:283px;width:1px;height:30px;background:#3a3f52"></div><div class="a" style="left:919px;top:283px;width:1px;height:30px;background:#050608"></div><div class="a" style="left:920px;top:283px;width:1px;height:30px;background:#3a3f52"></div><div class="a" style="left:1009px;top:283px;width:1px;height:30px;background:#050608"></div><div class="a" style="left:1010px;top:283px;width:1px;height:30px;background:#3a3f52"></div><div class="a" style="left:1119px;top:283px;width:1px;height:30px;background:#050608"></div><div class="a" style="left:1120px;top:283px;width:1px;height:30px;background:#3a3f52"></div><div class="a" style="left:85px;top:292px;width:11px;height:11px;border-radius:3px;background:linear-gradient(#fff,#f0f0f0);box-shadow:0 0 0 0.5px #999"></div><div class="t" style="left:111px;top:288px;font-size:12px;color:#fff;font-weight:bold;">Priority</div><div class="t" style="left:165px;top:288px;font-size:12px;color:#fff;font-weight:bold;">Entity</div><div class="t" style="left:315px;top:288px;font-size:12px;color:#fff;font-weight:bold;">Title</div><div class="t" style="left:545px;top:288px;font-size:12px;color:#fff;font-weight:bold;">Status</div><div class="t" style="left:625px;top:288px;font-size:12px;color:#fff;font-weight:bold;">Level</div><div class="t" style="left:685px;top:288px;font-size:12px;color:#fff;font-weight:bold;">First Seen</div><div class="t" style="left:805px;top:288px;font-size:12px;color:#fff;font-weight:bold;">Last Modified</div><div class="t" style="left:925px;top:288px;font-size:12px;color:#fff;font-weight:bold;">Rate</div><div class="t" style="left:1015px;top:288px;font-size:12px;color:#fff;font-weight:bold;">Group</div><div class="t" style="left:1125px;top:288px;font-size:12px;color:#fff;font-weight:bold;">Message</div><div class="a" style="left:78px;top:314px;width:1590px;height:28px;background:linear-gradient(#4f7265,#4e7165 27px,#567a6c)"></div><div class="a" style="left:78px;top:342px;width:1590px;height:2px;background:#02050a"></div><div class="a" style="left:84px;top:322px;width:11px;height:11px;border-radius:3px;background:linear-gradient(#fff,#f0f0f0);box-shadow:0 0 0 0.5px #999"></div><svg style="left:127px;top:317px" width="14" height="16" viewBox="0 0 14 16"><defs><linearGradient id="fl127_317" x1="0" y1="0" x2="1" y2="0"><stop offset="0" stop-color="#1a4cb0"/><stop offset="0.35" stop-color="#3a8af0"/><stop offset="0.55" stop-color="#90c8ff"/><stop offset="0.7" stop-color="#3a8af0"/><stop offset="1" stop-color="#1a4cb0"/></linearGradient></defs><path d="M0 15.6 H14" stroke="#000" stroke-width="1" opacity="0.18"/><path d="M4.6 0.3 L1 15.3" stroke="#0d0f12" stroke-width="1.7" stroke-linecap="round"/><path d="M4.8 1.9 Q7.5 2.8 9.7 4.2 L13.6 5.1 L11.8 11.7 L8 11 Q5.5 10 3.7 8.5 Z" fill="url(#fl127_317)" stroke="#000" stroke-opacity="0.25" stroke-width="0.5"/></svg><svg style="left:169px;top:317px" width="8" height="15" viewBox="0 0 8 15"><rect x="0.2" y="0.3" width="6.4" height="12" rx="0.6" fill="url(#bg)"/><rect x="1.2" y="1.8" width="4.4" height="0.7" fill="#0f3a5c" opacity="0.6"/><rect x="1.2" y="9.3" width="4.4" height="0.6" fill="#0f3a5c" opacity="0.5"/><rect x="0.2" y="12.2" width="6.4" height="1.6" fill="#d8eef5" opacity="0.8"/></svg><div class="t" style="left:180px;top:323px;font-size:12px;color:#fff;font-weight:bold;">kuiper2.milky.way</div><div class="t" style="left:314px;top:318px;font-size:12px;color:#fff;font-weight:bold;">Virtual/Physical CPU Disproportionate</div><div class="t" style="left:544px;top:318px;font-size:12px;color:#fff;font-weight:bold;">OPENED</div><div class="t" style="left:624px;top:318px;font-size:12px;color:#fff;font-weight:bold;">Info</div><div class="t" style="left:685px;top:318px;font-size:12px;color:#fff;font-weight:bold;">17.09.2015 00:01:43</div><div class="t" style="left:805px;top:318px;font-size:12px;color:#fff;font-weight:bold;">17.09.2015 01:01:56</div><svg style="left:924px;top:317px" width="16" height="16" viewBox="0 0 16 16"><path d="M8.00 0.50 L10.29 5.54 L15.80 6.17 L11.71 9.91 L12.82 15.33 L8.00 12.60 L3.18 15.33 L4.29 9.91 L0.20 6.17 L5.71 5.54 Z" fill="url(#starw)"/><clipPath id="c924_317"><rect x="0" y="0" width="16" height="16"/></clipPath><path d="M8.00 0.50 L10.29 5.54 L15.80 6.17 L11.71 9.91 L12.82 15.33 L8.00 12.60 L3.18 15.33 L4.29 9.91 L0.20 6.17 L5.71 5.54 Z" fill="url(#star)" clip-path="url(#c924_317)"/></svg><svg style="left:940px;top:317px" width="16" height="16" viewBox="0 0 16 16"><path d="M8.00 0.50 L10.29 5.54 L15.80 6.17 L11.71 9.91 L12.82 15.33 L8.00 12.60 L3.18 15.33 L4.29 9.91 L0.20 6.17 L5.71 5.54 Z" fill="url(#starw)"/><clipPath id="c940_317"><rect x="0" y="0" width="16" height="16"/></clipPath><path d="M8.00 0.50 L10.29 5.54 L15.80 6.17 L11.71 9.91 L12.82 15.33 L8.00 12.60 L3.18 15.33 L4.29 9.91 L0.20 6.17 L5.71 5.54 Z" fill="url(#star)" clip-path="url(#c940_317)"/></svg><svg style="left:956px;top:317px" width="16" height="16" viewBox="0 0 16 16"><path d="M8.00 0.50 L10.29 5.54 L15.80 6.17 L11.71 9.91 L12.82 15.33 L8.00 12.60 L3.18 15.33 L4.29 9.91 L0.20 6.17 L5.71 5.54 Z" fill="url(#starw)"/><clipPath id="c956_317"><rect x="0" y="0" width="16" height="16"/></clipPath><path d="M8.00 0.50 L10.29 5.54 L15.80 6.17 L11.71 9.91 L12.82 15.33 L8.00 12.60 L3.18 15.33 L4.29 9.91 L0.20 6.17 L5.71 5.54 Z" fill="url(#star)" clip-path="url(#c956_317)"/></svg><svg style="left:972px;top:317px" width="16" height="16" viewBox="0 0 16 16"><path d="M8.00 0.50 L10.29 5.54 L15.80 6.17 L11.71 9.91 L12.82 15.33 L8.00 12.60 L3.18 15.33 L4.29 9.91 L0.20 6.17 L5.71 5.54 Z" fill="url(#starw)"/><clipPath id="c972_317"><rect x="0" y="0" width="16" height="16"/></clipPath><path d="M8.00 0.50 L10.29 5.54 L15.80 6.17 L11.71 9.91 L12.82 15.33 L8.00 12.60 L3.18 15.33 L4.29 9.91 L0.20 6.17 L5.71 5.54 Z" fill="url(#star)" clip-path="url(#c972_317)"/></svg><svg style="left:988px;top:317px" width="16" height="16" viewBox="0 0 16 16"><path d="M8.00 0.50 L10.29 5.54 L15.80 6.17 L11.71 9.91 L12.82 15.33 L8.00 12.60 L3.18 15.33 L4.29 9.91 L0.20 6.17 L5.71 5.54 Z" fill="url(#starw)"/></svg><div class="t" style="left:1014px;top:318px;font-size:12px;color:#fff;font-weight:bold;">Configuration</div><div class="t" style="left:1124px;top:318px;width:540px;overflow:hidden;text-overflow:ellipsis;font-size:12px;font-weight:bold;color:#fff">Host 'kuiper2.milky.way' experiences 100% pCPu overcommitment</div><div class="a" style="left:78px;top:344px;width:1590px;height:28px;background:linear-gradient(#cc7a0a,#bf7205 1px,#bf7205 27px,#c4780a)"></div><div class="a" style="left:78px;top:372px;width:1590px;height:2px;background:#02050a"></div><div class="a" style="left:84px;top:352px;width:11px;height:11px;border-radius:3px;background:linear-gradient(#fff,#f0f0f0);box-shadow:0 0 0 0.5px #999"></div><svg style="left:127px;top:347px" width="14" height="16" viewBox="0 0 14 16"><defs><linearGradient id="fl127_347" x1="0" y1="0" x2="1" y2="0"><stop offset="0" stop-color="#1e6a08"/><stop offset="0.35" stop-color="#6cc81c"/><stop offset="0.55" stop-color="#c8f890"/><stop offset="0.7" stop-color="#6cc81c"/><stop offset="1" stop-color="#1e6a08"/></linearGradient></defs><path d="M0 15.6 H14" stroke="#000" stroke-width="1" opacity="0.18"/><path d="M4.6 0.3 L1 15.3" stroke="#0d0f12" stroke-width="1.7" stroke-linecap="round"/><path d="M4.8 1.9 Q7.5 2.8 9.7 4.2 L13.6 5.1 L11.8 11.7 L8 11 Q5.5 10 3.7 8.5 Z" fill="url(#fl127_347)" stroke="#000" stroke-opacity="0.25" stroke-width="0.5"/></svg><svg style="left:169px;top:347px" width="8" height="15" viewBox="0 0 8 15"><rect x="0.2" y="0.3" width="6.4" height="12" rx="0.6" fill="url(#bg)"/><rect x="1.2" y="1.8" width="4.4" height="0.7" fill="#0f3a5c" opacity="0.6"/><rect x="1.2" y="9.3" width="4.4" height="0.6" fill="#0f3a5c" opacity="0.5"/><rect x="0.2" y="12.2" width="6.4" height="1.6" fill="#d8eef5" opacity="0.8"/></svg><div class="t" style="left:180px;top:353px;font-size:12px;color:#fff;font-weight:bold;">kuiper1.milky.way</div><div class="t" style="left:314px;top:348px;font-size:12px;color:#fff;font-weight:bold;">vNetwork Configuration (NCN03)</div><div class="t" style="left:544px;top:348px;font-size:12px;color:#fff;font-weight:bold;">OPENED</div><div class="t" style="left:624px;top:348px;font-size:12px;color:#fff;font-weight:bold;">Warning</div><div class="t" style="left:685px;top:348px;font-size:12px;color:#fff;font-weight:bold;">16.09.2015 23:14:04</div><div class="t" style="left:805px;top:348px;font-size:12px;color:#fff;font-weight:bold;">17.09.2015 00:01:44</div><svg style="left:924px;top:347px" width="16" height="16" viewBox="0 0 16 16"><path d="M8.00 0.50 L10.29 5.54 L15.80 6.17 L11.71 9.91 L12.82 15.33 L8.00 12.60 L3.18 15.33 L4.29 9.91 L0.20 6.17 L5.71 5.54 Z" fill="url(#starw)"/><clipPath id="c924_347"><rect x="0" y="0" width="16" height="16"/></clipPath><path d="M8.00 0.50 L10.29 5.54 L15.80 6.17 L11.71 9.91 L12.82 15.33 L8.00 12.60 L3.18 15.33 L4.29 9.91 L0.20 6.17 L5.71 5.54 Z" fill="url(#star)" clip-path="url(#c924_347)"/></svg><svg style="left:940px;top:347px" width="16" height="16" viewBox="0 0 16 16"><path d="M8.00 0.50 L10.29 5.54 L15.80 6.17 L11.71 9.91 L12.82 15.33 L8.00 12.60 L3.18 15.33 L4.29 9.91 L0.20 6.17 L5.71 5.54 Z" fill="url(#starw)"/><clipPath id="c940_347"><rect x="0" y="0" width="16" height="16"/></clipPath><path d="M8.00 0.50 L10.29 5.54 L15.80 6.17 L11.71 9.91 L12.82 15.33 L8.00 12.60 L3.18 15.33 L4.29 9.91 L0.20 6.17 L5.71 5.54 Z" fill="url(#star)" clip-path="url(#c940_347)"/></svg><svg style="left:956px;top:347px" width="16" height="16" viewBox="0 0 16 16"><path d="M8.00 0.50 L10.29 5.54 L15.80 6.17 L11.71 9.91 L12.82 15.33 L8.00 12.60 L3.18 15.33 L4.29 9.91 L0.20 6.17 L5.71 5.54 Z" fill="url(#starw)"/><clipPath id="c956_347"><rect x="0" y="0" width="16" height="16"/></clipPath><path d="M8.00 0.50 L10.29 5.54 L15.80 6.17 L11.71 9.91 L12.82 15.33 L8.00 12.60 L3.18 15.33 L4.29 9.91 L0.20 6.17 L5.71 5.54 Z" fill="url(#star)" clip-path="url(#c956_347)"/></svg><svg style="left:972px;top:347px" width="16" height="16" viewBox="0 0 16 16"><path d="M8.00 0.50 L10.29 5.54 L15.80 6.17 L11.71 9.91 L12.82 15.33 L8.00 12.60 L3.18 15.33 L4.29 9.91 L0.20 6.17 L5.71 5.54 Z" fill="url(#starw)"/><clipPath id="c972_347"><rect x="0" y="0" width="8.0" height="16"/></clipPath><path d="M8.00 0.50 L10.29 5.54 L15.80 6.17 L11.71 9.91 L12.82 15.33 L8.00 12.60 L3.18 15.33 L4.29 9.91 L0.20 6.17 L5.71 5.54 Z" fill="url(#star)" clip-path="url(#c972_347)"/></svg><svg style="left:988px;top:347px" width="16" height="16" viewBox="0 0 16 16"><path d="M8.00 0.50 L10.29 5.54 L15.80 6.17 L11.71 9.91 L12.82 15.33 L8.00 12.60 L3.18 15.33 L4.29 9.91 L0.20 6.17 L5.71 5.54 Z" fill="url(#starw)"/></svg><div class="t" style="left:1014px;top:348px;font-size:12px;color:#fff;font-weight:bold;">Security</div><div class="t" style="left:1124px;top:348px;width:540px;overflow:hidden;text-overflow:ellipsis;font-size:12px;font-weight:bold;color:#fff">Ensure the "MAC Address Change" Policy is set to Reject on the following Switches: 'vSwitch1'</div><div class="a" style="left:78px;top:374px;width:1590px;height:28px;background:linear-gradient(#cc7a0a,#bf7205 1px,#bf7205 27px,#c4780a)"></div><div class="a" style="left:78px;top:402px;width:1590px;height:2px;background:#02050a"></div><div class="a" style="left:84px;top:382px;width:11px;height:11px;border-radius:3px;background:linear-gradient(#fff,#f0f0f0);box-shadow:0 0 0 0.5px #999"></div><svg style="left:127px;top:377px" width="14" height="16" viewBox="0 0 14 16"><defs><linearGradient id="fl127_377" x1="0" y1="0" x2="1" y2="0"><stop offset="0" stop-color="#1e6a08"/><stop offset="0.35" stop-color="#6cc81c"/><stop offset="0.55" stop-color="#c8f890"/><stop offset="0.7" stop-color="#6cc81c"/><stop offset="1" stop-color="#1e6a08"/></linearGradient></defs><path d="M0 15.6 H14" stroke="#000" stroke-width="1" opacity="0.18"/><path d="M4.6 0.3 L1 15.3" stroke="#0d0f12" stroke-width="1.7" stroke-linecap="round"/><path d="M4.8 1.9 Q7.5 2.8 9.7 4.2 L13.6 5.1 L11.8 11.7 L8 11 Q5.5 10 3.7 8.5 Z" fill="url(#fl127_377)" stroke="#000" stroke-opacity="0.25" stroke-width="0.5"/></svg><svg style="left:169px;top:377px" width="8" height="15" viewBox="0 0 8 15"><rect x="0.2" y="0.3" width="6.4" height="12" rx="0.6" fill="url(#bg)"/><rect x="1.2" y="1.8" width="4.4" height="0.7" fill="#0f3a5c" opacity="0.6"/><rect x="1.2" y="9.3" width="4.4" height="0.6" fill="#0f3a5c" opacity="0.5"/><rect x="0.2" y="12.2" width="6.4" height="1.6" fill="#d8eef5" opacity="0.8"/></svg><div class="t" style="left:180px;top:383px;font-size:12px;color:#fff;font-weight:bold;">kuiper2.milky.way</div><div class="t" style="left:314px;top:378px;font-size:12px;color:#fff;font-weight:bold;">vNetwork Configuration (NCN03)</div><div class="t" style="left:544px;top:378px;font-size:12px;color:#fff;font-weight:bold;">OPENED</div><div class="t" style="left:624px;top:378px;font-size:12px;color:#fff;font-weight:bold;">Warning</div><div class="t" style="left:685px;top:378px;font-size:12px;color:#fff;font-weight:bold;">16.09.2015 23:14:04</div><div class="t" style="left:805px;top:378px;font-size:12px;color:#fff;font-weight:bold;">17.09.2015 00:01:44</div><svg style="left:924px;top:377px" width="16" height="16" viewBox="0 0 16 16"><path d="M8.00 0.50 L10.29 5.54 L15.80 6.17 L11.71 9.91 L12.82 15.33 L8.00 12.60 L3.18 15.33 L4.29 9.91 L0.20 6.17 L5.71 5.54 Z" fill="url(#starw)"/><clipPath id="c924_377"><rect x="0" y="0" width="16" height="16"/></clipPath><path d="M8.00 0.50 L10.29 5.54 L15.80 6.17 L11.71 9.91 L12.82 15.33 L8.00 12.60 L3.18 15.33 L4.29 9.91 L0.20 6.17 L5.71 5.54 Z" fill="url(#star)" clip-path="url(#c924_377)"/></svg><svg style="left:940px;top:377px" width="16" height="16" viewBox="0 0 16 16"><path d="M8.00 0.50 L10.29 5.54 L15.80 6.17 L11.71 9.91 L12.82 15.33 L8.00 12.60 L3.18 15.33 L4.29 9.91 L0.20 6.17 L5.71 5.54 Z" fill="url(#starw)"/><clipPath id="c940_377"><rect x="0" y="0" width="16" height="16"/></clipPath><path d="M8.00 0.50 L10.29 5.54 L15.80 6.17 L11.71 9.91 L12.82 15.33 L8.00 12.60 L3.18 15.33 L4.29 9.91 L0.20 6.17 L5.71 5.54 Z" fill="url(#star)" clip-path="url(#c940_377)"/></svg><svg style="left:956px;top:377px" width="16" height="16" viewBox="0 0 16 16"><path d="M8.00 0.50 L10.29 5.54 L15.80 6.17 L11.71 9.91 L12.82 15.33 L8.00 12.60 L3.18 15.33 L4.29 9.91 L0.20 6.17 L5.71 5.54 Z" fill="url(#starw)"/><clipPath id="c956_377"><rect x="0" y="0" width="16" height="16"/></clipPath><path d="M8.00 0.50 L10.29 5.54 L15.80 6.17 L11.71 9.91 L12.82 15.33 L8.00 12.60 L3.18 15.33 L4.29 9.91 L0.20 6.17 L5.71 5.54 Z" fill="url(#star)" clip-path="url(#c956_377)"/></svg><svg style="left:972px;top:377px" width="16" height="16" viewBox="0 0 16 16"><path d="M8.00 0.50 L10.29 5.54 L15.80 6.17 L11.71 9.91 L12.82 15.33 L8.00 12.60 L3.18 15.33 L4.29 9.91 L0.20 6.17 L5.71 5.54 Z" fill="url(#starw)"/><clipPath id="c972_377"><rect x="0" y="0" width="8.0" height="16"/></clipPath><path d="M8.00 0.50 L10.29 5.54 L15.80 6.17 L11.71 9.91 L12.82 15.33 L8.00 12.60 L3.18 15.33 L4.29 9.91 L0.20 6.17 L5.71 5.54 Z" fill="url(#star)" clip-path="url(#c972_377)"/></svg><svg style="left:988px;top:377px" width="16" height="16" viewBox="0 0 16 16"><path d="M8.00 0.50 L10.29 5.54 L15.80 6.17 L11.71 9.91 L12.82 15.33 L8.00 12.60 L3.18 15.33 L4.29 9.91 L0.20 6.17 L5.71 5.54 Z" fill="url(#starw)"/></svg><div class="t" style="left:1014px;top:378px;font-size:12px;color:#fff;font-weight:bold;">Security</div><div class="t" style="left:1124px;top:378px;width:540px;overflow:hidden;text-overflow:ellipsis;font-size:12px;font-weight:bold;color:#fff">Ensure the "MAC Address Change" Policy is set to Reject on the following Switches: 'vSwitch1'</div><div class="a" style="left:78px;top:404px;width:1590px;height:28px;background:linear-gradient(#cc7a0a,#bf7205 1px,#bf7205 27px,#c4780a)"></div><div class="a" style="left:78px;top:432px;width:1590px;height:2px;background:#02050a"></div><div class="a" style="left:84px;top:412px;width:11px;height:11px;border-radius:3px;background:linear-gradient(#fff,#f0f0f0);box-shadow:0 0 0 0.5px #999"></div><svg style="left:127px;top:407px" width="14" height="16" viewBox="0 0 14 16"><defs><linearGradient id="fl127_407" x1="0" y1="0" x2="1" y2="0"><stop offset="0" stop-color="#1e6a08"/><stop offset="0.35" stop-color="#6cc81c"/><stop offset="0.55" stop-color="#c8f890"/><stop offset="0.7" stop-color="#6cc81c"/><stop offset="1" stop-color="#1e6a08"/></linearGradient></defs><path d="M0 15.6 H14" stroke="#000" stroke-width="1" opacity="0.18"/><path d="M4.6 0.3 L1 15.3" stroke="#0d0f12" stroke-width="1.7" stroke-linecap="round"/><path d="M4.8 1.9 Q7.5 2.8 9.7 4.2 L13.6 5.1 L11.8 11.7 L8 11 Q5.5 10 3.7 8.5 Z" fill="url(#fl127_407)" stroke="#000" stroke-opacity="0.25" stroke-width="0.5"/></svg><svg style="left:169px;top:407px" width="8" height="15" viewBox="0 0 8 15"><rect x="0.2" y="0.3" width="6.4" height="12" rx="0.6" fill="url(#bg)"/><rect x="1.2" y="1.8" width="4.4" height="0.7" fill="#0f3a5c" opacity="0.6"/><rect x="1.2" y="9.3" width="4.4" height="0.6" fill="#0f3a5c" opacity="0.5"/><rect x="0.2" y="12.2" width="6.4" height="1.6" fill="#d8eef5" opacity="0.8"/></svg><div class="t" style="left:180px;top:413px;font-size:12px;color:#fff;font-weight:bold;">kuiper1.milky.way</div><div class="t" style="left:314px;top:408px;font-size:12px;color:#fff;font-weight:bold;">vNetwork Configuration (NCN04)</div><div class="t" style="left:544px;top:408px;font-size:12px;color:#fff;font-weight:bold;">OPENED</div><div class="t" style="left:624px;top:408px;font-size:12px;color:#fff;font-weight:bold;">Warning</div><div class="t" style="left:685px;top:408px;font-size:12px;color:#fff;font-weight:bold;">16.09.2015 23:14:04</div><div class="t" style="left:805px;top:408px;font-size:12px;color:#fff;font-weight:bold;">17.09.2015 00:01:44</div><svg style="left:924px;top:407px" width="16" height="16" viewBox="0 0 16 16"><path d="M8.00 0.50 L10.29 5.54 L15.80 6.17 L11.71 9.91 L12.82 15.33 L8.00 12.60 L3.18 15.33 L4.29 9.91 L0.20 6.17 L5.71 5.54 Z" fill="url(#starw)"/><clipPath id="c924_407"><rect x="0" y="0" width="16" height="16"/></clipPath><path d="M8.00 0.50 L10.29 5.54 L15.80 6.17 L11.71 9.91 L12.82 15.33 L8.00 12.60 L3.18 15.33 L4.29 9.91 L0.20 6.17 L5.71 5.54 Z" fill="url(#star)" clip-path="url(#c924_407)"/></svg><svg style="left:940px;top:407px" width="16" height="16" viewBox="0 0 16 16"><path d="M8.00 0.50 L10.29 5.54 L15.80 6.17 L11.71 9.91 L12.82 15.33 L8.00 12.60 L3.18 15.33 L4.29 9.91 L0.20 6.17 L5.71 5.54 Z" fill="url(#starw)"/><clipPath id="c940_407"><rect x="0" y="0" width="16" height="16"/></clipPath><path d="M8.00 0.50 L10.29 5.54 L15.80 6.17 L11.71 9.91 L12.82 15.33 L8.00 12.60 L3.18 15.33 L4.29 9.91 L0.20 6.17 L5.71 5.54 Z" fill="url(#star)" clip-path="url(#c940_407)"/></svg><svg style="left:956px;top:407px" width="16" height="16" viewBox="0 0 16 16"><path d="M8.00 0.50 L10.29 5.54 L15.80 6.17 L11.71 9.91 L12.82 15.33 L8.00 12.60 L3.18 15.33 L4.29 9.91 L0.20 6.17 L5.71 5.54 Z" fill="url(#starw)"/><clipPath id="c956_407"><rect x="0" y="0" width="16" height="16"/></clipPath><path d="M8.00 0.50 L10.29 5.54 L15.80 6.17 L11.71 9.91 L12.82 15.33 L8.00 12.60 L3.18 15.33 L4.29 9.91 L0.20 6.17 L5.71 5.54 Z" fill="url(#star)" clip-path="url(#c956_407)"/></svg><svg style="left:972px;top:407px" width="16" height="16" viewBox="0 0 16 16"><path d="M8.00 0.50 L10.29 5.54 L15.80 6.17 L11.71 9.91 L12.82 15.33 L8.00 12.60 L3.18 15.33 L4.29 9.91 L0.20 6.17 L5.71 5.54 Z" fill="url(#starw)"/><clipPath id="c972_407"><rect x="0" y="0" width="8.0" height="16"/></clipPath><path d="M8.00 0.50 L10.29 5.54 L15.80 6.17 L11.71 9.91 L12.82 15.33 L8.00 12.60 L3.18 15.33 L4.29 9.91 L0.20 6.17 L5.71 5.54 Z" fill="url(#star)" clip-path="url(#c972_407)"/></svg><svg style="left:988px;top:407px" width="16" height="16" viewBox="0 0 16 16"><path d="M8.00 0.50 L10.29 5.54 L15.80 6.17 L11.71 9.91 L12.82 15.33 L8.00 12.60 L3.18 15.33 L4.29 9.91 L0.20 6.17 L5.71 5.54 Z" fill="url(#starw)"/></svg><div class="t" style="left:1014px;top:408px;font-size:12px;color:#fff;font-weight:bold;">Security</div><div class="t" style="left:1124px;top:408px;width:540px;overflow:hidden;text-overflow:ellipsis;font-size:12px;font-weight:bold;color:#fff">Ensure the "Forged Transmits" Policy is set to Reject on the following Switches: 'vSwitch1'</div><div class="a" style="left:78px;top:434px;width:1590px;height:28px;background:linear-gradient(#cc7a0a,#bf7205 1px,#bf7205 27px,#c4780a)"></div><div class="a" style="left:78px;top:462px;width:1590px;height:2px;background:#02050a"></div><div class="a" style="left:84px;top:442px;width:11px;height:11px;border-radius:3px;background:linear-gradient(#fff,#f0f0f0);box-shadow:0 0 0 0.5px #999"></div><svg style="left:127px;top:437px" width="14" height="16" viewBox="0 0 14 16"><defs><linearGradient id="fl127_437" x1="0" y1="0" x2="1" y2="0"><stop offset="0" stop-color="#1e6a08"/><stop offset="0.35" stop-color="#6cc81c"/><stop offset="0.55" stop-color="#c8f890"/><stop offset="0.7" stop-color="#6cc81c"/><stop offset="1" stop-color="#1e6a08"/></linearGradient></defs><path d="M0 15.6 H14" stroke="#000" stroke-width="1" opacity="0.18"/><path d="M4.6 0.3 L1 15.3" stroke="#0d0f12" stroke-width="1.7" stroke-linecap="round"/><path d="M4.8 1.9 Q7.5 2.8 9.7 4.2 L13.6 5.1 L11.8 11.7 L8 11 Q5.5 10 3.7 8.5 Z" fill="url(#fl127_437)" stroke="#000" stroke-opacity="0.25" stroke-width="0.5"/></svg><svg style="left:169px;top:437px" width="8" height="15" viewBox="0 0 8 15"><rect x="0.2" y="0.3" width="6.4" height="12" rx="0.6" fill="url(#bg)"/><rect x="1.2" y="1.8" width="4.4" height="0.7" fill="#0f3a5c" opacity="0.6"/><rect x="1.2" y="9.3" width="4.4" height="0.6" fill="#0f3a5c" opacity="0.5"/><rect x="0.2" y="12.2" width="6.4" height="1.6" fill="#d8eef5" opacity="0.8"/></svg><div class="t" style="left:180px;top:443px;font-size:12px;color:#fff;font-weight:bold;">kuiper2.milky.way</div><div class="t" style="left:314px;top:438px;font-size:12px;color:#fff;font-weight:bold;">vNetwork Configuration (NCN04)</div><div class="t" style="left:544px;top:438px;font-size:12px;color:#fff;font-weight:bold;">OPENED</div><div class="t" style="left:624px;top:438px;font-size:12px;color:#fff;font-weight:bold;">Warning</div><div class="t" style="left:685px;top:438px;font-size:12px;color:#fff;font-weight:bold;">16.09.2015 23:14:04</div><div class="t" style="left:805px;top:438px;font-size:12px;color:#fff;font-weight:bold;">17.09.2015 00:01:44</div><svg style="left:924px;top:437px" width="16" height="16" viewBox="0 0 16 16"><path d="M8.00 0.50 L10.29 5.54 L15.80 6.17 L11.71 9.91 L12.82 15.33 L8.00 12.60 L3.18 15.33 L4.29 9.91 L0.20 6.17 L5.71 5.54 Z" fill="url(#starw)"/><clipPath id="c924_437"><rect x="0" y="0" width="16" height="16"/></clipPath><path d="M8.00 0.50 L10.29 5.54 L15.80 6.17 L11.71 9.91 L12.82 15.33 L8.00 12.60 L3.18 15.33 L4.29 9.91 L0.20 6.17 L5.71 5.54 Z" fill="url(#star)" clip-path="url(#c924_437)"/></svg><svg style="left:940px;top:437px" width="16" height="16" viewBox="0 0 16 16"><path d="M8.00 0.50 L10.29 5.54 L15.80 6.17 L11.71 9.91 L12.82 15.33 L8.00 12.60 L3.18 15.33 L4.29 9.91 L0.20 6.17 L5.71 5.54 Z" fill="url(#starw)"/><clipPath id="c940_437"><rect x="0" y="0" width="16" height="16"/></clipPath><path d="M8.00 0.50 L10.29 5.54 L15.80 6.17 L11.71 9.91 L12.82 15.33 L8.00 12.60 L3.18 15.33 L4.29 9.91 L0.20 6.17 L5.71 5.54 Z" fill="url(#star)" clip-path="url(#c940_437)"/></svg><svg style="left:956px;top:437px" width="16" height="16" viewBox="0 0 16 16"><path d="M8.00 0.50 L10.29 5.54 L15.80 6.17 L11.71 9.91 L12.82 15.33 L8.00 12.60 L3.18 15.33 L4.29 9.91 L0.20 6.17 L5.71 5.54 Z" fill="url(#starw)"/><clipPath id="c956_437"><rect x="0" y="0" width="16" height="16"/></clipPath><path d="M8.00 0.50 L10.29 5.54 L15.80 6.17 L11.71 9.91 L12.82 15.33 L8.00 12.60 L3.18 15.33 L4.29 9.91 L0.20 6.17 L5.71 5.54 Z" fill="url(#star)" clip-path="url(#c956_437)"/></svg><svg style="left:972px;top:437px" width="16" height="16" viewBox="0 0 16 16"><path d="M8.00 0.50 L10.29 5.54 L15.80 6.17 L11.71 9.91 L12.82 15.33 L8.00 12.60 L3.18 15.33 L4.29 9.91 L0.20 6.17 L5.71 5.54 Z" fill="url(#starw)"/><clipPath id="c972_437"><rect x="0" y="0" width="8.0" height="16"/></clipPath><path d="M8.00 0.50 L10.29 5.54 L15.80 6.17 L11.71 9.91 L12.82 15.33 L8.00 12.60 L3.18 15.33 L4.29 9.91 L0.20 6.17 L5.71 5.54 Z" fill="url(#star)" clip-path="url(#c972_437)"/></svg><svg style="left:988px;top:437px" width="16" height="16" viewBox="0 0 16 16"><path d="M8.00 0.50 L10.29 5.54 L15.80 6.17 L11.71 9.91 L12.82 15.33 L8.00 12.60 L3.18 15.33 L4.29 9.91 L0.20 6.17 L5.71 5.54 Z" fill="url(#starw)"/></svg><div class="t" style="left:1014px;top:438px;font-size:12px;color:#fff;font-weight:bold;">Security</div><div class="t" style="left:1124px;top:438px;width:540px;overflow:hidden;text-overflow:ellipsis;font-size:12px;font-weight:bold;color:#fff">Ensure the "Forged Transmits" Policy is set to Reject on the following Switches: 'vSwitch1'</div><div class="a" style="left:78px;top:464px;width:1590px;height:28px;background:linear-gradient(#cc7a0a,#bf7205 1px,#bf7205 27px,#c4780a)"></div><div class="a" style="left:78px;top:492px;width:1590px;height:2px;background:#02050a"></div><div class="a" style="left:84px;top:472px;width:11px;height:11px;border-radius:3px;background:linear-gradient(#fff,#f0f0f0);box-shadow:0 0 0 0.5px #999"></div><svg style="left:127px;top:467px" width="14" height="16" viewBox="0 0 14 16"><defs><linearGradient id="fl127_467" x1="0" y1="0" x2="1" y2="0"><stop offset="0" stop-color="#1e6a08"/><stop offset="0.35" stop-color="#6cc81c"/><stop offset="0.55" stop-color="#c8f890"/><stop offset="0.7" stop-color="#6cc81c"/><stop offset="1" stop-color="#1e6a08"/></linearGradient></defs><path d="M0 15.6 H14" stroke="#000" stroke-width="1" opacity="0.18"/><path d="M4.6 0.3 L1 15.3" stroke="#0d0f12" stroke-width="1.7" stroke-linecap="round"/><path d="M4.8 1.9 Q7.5 2.8 9.7 4.2 L13.6 5.1 L11.8 11.7 L8 11 Q5.5 10 3.7 8.5 Z" fill="url(#fl127_467)" stroke="#000" stroke-opacity="0.25" stroke-width="0.5"/></svg><svg style="left:169px;top:467px" width="8" height="15" viewBox="0 0 8 15"><rect x="0.2" y="0.3" width="6.4" height="12" rx="0.6" fill="url(#bg)"/><rect x="1.2" y="1.8" width="4.4" height="0.7" fill="#0f3a5c" opacity="0.6"/><rect x="1.2" y="9.3" width="4.4" height="0.6" fill="#0f3a5c" opacity="0.5"/><rect x="0.2" y="12.2" width="6.4" height="1.6" fill="#d8eef5" opacity="0.8"/></svg><div class="t" style="left:180px;top:473px;font-size:12px;color:#fff;font-weight:bold;">kuiper2.milky.way</div><div class="t" style="left:314px;top:468px;font-size:12px;color:#fff;font-weight:bold;">Log Warning Found</div><div class="t" style="left:544px;top:468px;font-size:12px;color:#fff;font-weight:bold;">OPENED</div><div class="t" style="left:624px;top:468px;font-size:12px;color:#fff;font-weight:bold;">Warning</div><div class="t" style="left:685px;top:468px;font-size:12px;color:#fff;font-weight:bold;">16.09.2015 23:14:05</div><div class="t" style="left:805px;top:468px;font-size:12px;color:#fff;font-weight:bold;">17.09.2015 00:01:44</div><svg style="left:924px;top:467px" width="16" height="16" viewBox="0 0 16 16"><path d="M8.00 0.50 L10.29 5.54 L15.80 6.17 L11.71 9.91 L12.82 15.33 L8.00 12.60 L3.18 15.33 L4.29 9.91 L0.20 6.17 L5.71 5.54 Z" fill="url(#starw)"/><clipPath id="c924_467"><rect x="0" y="0" width="16" height="16"/></clipPath><path d="M8.00 0.50 L10.29 5.54 L15.80 6.17 L11.71 9.91 L12.82 15.33 L8.00 12.60 L3.18 15.33 L4.29 9.91 L0.20 6.17 L5.71 5.54 Z" fill="url(#star)" clip-path="url(#c924_467)"/></svg><svg style="left:940px;top:467px" width="16" height="16" viewBox="0 0 16 16"><path d="M8.00 0.50 L10.29 5.54 L15.80 6.17 L11.71 9.91 L12.82 15.33 L8.00 12.60 L3.18 15.33 L4.29 9.91 L0.20 6.17 L5.71 5.54 Z" fill="url(#starw)"/><clipPath id="c940_467"><rect x="0" y="0" width="16" height="16"/></clipPath><path d="M8.00 0.50 L10.29 5.54 L15.80 6.17 L11.71 9.91 L12.82 15.33 L8.00 12.60 L3.18 15.33 L4.29 9.91 L0.20 6.17 L5.71 5.54 Z" fill="url(#star)" clip-path="url(#c940_467)"/></svg><svg style="left:956px;top:467px" width="16" height="16" viewBox="0 0 16 16"><path d="M8.00 0.50 L10.29 5.54 L15.80 6.17 L11.71 9.91 L12.82 15.33 L8.00 12.60 L3.18 15.33 L4.29 9.91 L0.20 6.17 L5.71 5.54 Z" fill="url(#starw)"/><clipPath id="c956_467"><rect x="0" y="0" width="16" height="16"/></clipPath><path d="M8.00 0.50 L10.29 5.54 L15.80 6.17 L11.71 9.91 L12.82 15.33 L8.00 12.60 L3.18 15.33 L4.29 9.91 L0.20 6.17 L5.71 5.54 Z" fill="url(#star)" clip-path="url(#c956_467)"/></svg><svg style="left:972px;top:467px" width="16" height="16" viewBox="0 0 16 16"><path d="M8.00 0.50 L10.29 5.54 L15.80 6.17 L11.71 9.91 L12.82 15.33 L8.00 12.60 L3.18 15.33 L4.29 9.91 L0.20 6.17 L5.71 5.54 Z" fill="url(#starw)"/></svg><svg style="left:988px;top:467px" width="16" height="16" viewBox="0 0 16 16"><path d="M8.00 0.50 L10.29 5.54 L15.80 6.17 L11.71 9.91 L12.82 15.33 L8.00 12.60 L3.18 15.33 L4.29 9.91 L0.20 6.17 L5.71 5.54 Z" fill="url(#starw)"/></svg><div class="t" style="left:1014px;top:468px;font-size:12px;color:#fff;font-weight:bold;">Log File</div><div class="t" style="left:1124px;top:468px;width:540px;overflow:hidden;text-overflow:ellipsis;font-size:12px;font-weight:bold;color:#fff">[hostd]vmkernel.log: Log Warning Found: - cpu2:2758143)WARNING: CBT: 2056: Unsupported ioctl</div><div class="a" style="left:78px;top:494px;width:1590px;height:28px;background:linear-gradient(#cc7a0a,#bf7205 1px,#bf7205 27px,#c4780a)"></div><div class="a" style="left:78px;top:522px;width:1590px;height:2px;background:#02050a"></div><div class="a" style="left:84px;top:502px;width:11px;height:11px;border-radius:3px;background:linear-gradient(#fff,#f0f0f0);box-shadow:0 0 0 0.5px #999"></div><svg style="left:127px;top:497px" width="14" height="16" viewBox="0 0 14 16"><defs><linearGradient id="fl127_497" x1="0" y1="0" x2="1" y2="0"><stop offset="0" stop-color="#1e6a08"/><stop offset="0.35" stop-color="#6cc81c"/><stop offset="0.55" stop-color="#c8f890"/><stop offset="0.7" stop-color="#6cc81c"/><stop offset="1" stop-color="#1e6a08"/></linearGradient></defs><path d="M0 15.6 H14" stroke="#000" stroke-width="1" opacity="0.18"/><path d="M4.6 0.3 L1 15.3" stroke="#0d0f12" stroke-width="1.7" stroke-linecap="round"/><path d="M4.8 1.9 Q7.5 2.8 9.7 4.2 L13.6 5.1 L11.8 11.7 L8 11 Q5.5 10 3.7 8.5 Z" fill="url(#fl127_497)" stroke="#000" stroke-opacity="0.25" stroke-width="0.5"/></svg><svg style="left:169px;top:497px" width="8" height="15" viewBox="0 0 8 15"><rect x="0.2" y="0.3" width="6.4" height="12" rx="0.6" fill="url(#bg)"/><rect x="1.2" y="1.8" width="4.4" height="0.7" fill="#0f3a5c" opacity="0.6"/><rect x="1.2" y="9.3" width="4.4" height="0.6" fill="#0f3a5c" opacity="0.5"/><rect x="0.2" y="12.2" width="6.4" height="1.6" fill="#d8eef5" opacity="0.8"/></svg><div class="t" style="left:180px;top:503px;font-size:12px;color:#fff;font-weight:bold;">kuiper2.milky.way</div><div class="t" style="left:314px;top:498px;font-size:12px;color:#fff;font-weight:bold;">Host Console (HCN04)</div><div class="t" style="left:544px;top:498px;font-size:12px;color:#fff;font-weight:bold;">OPENED</div><div class="t" style="left:624px;top:498px;font-size:12px;color:#fff;font-weight:bold;">Warning</div><div class="t" style="left:685px;top:498px;font-size:12px;color:#fff;font-weight:bold;">16.09.2015 23:14:04</div><div class="t" style="left:805px;top:498px;font-size:12px;color:#fff;font-weight:bold;">17.09.2015 00:01:44</div><svg style="left:924px;top:497px" width="16" height="16" viewBox="0 0 16 16"><path d="M8.00 0.50 L10.29 5.54 L15.80 6.17 L11.71 9.91 L12.82 15.33 L8.00 12.60 L3.18 15.33 L4.29 9.91 L0.20 6.17 L5.71 5.54 Z" fill="url(#starw)"/></svg><svg style="left:940px;top:497px" width="16" height="16" viewBox="0 0 16 16"><path d="M8.00 0.50 L10.29 5.54 L15.80 6.17 L11.71 9.91 L12.82 15.33 L8.00 12.60 L3.18 15.33 L4.29 9.91 L0.20 6.17 L5.71 5.54 Z" fill="url(#starw)"/></svg><svg style="left:956px;top:497px" width="16" height="16" viewBox="0 0 16 16"><path d="M8.00 0.50 L10.29 5.54 L15.80 6.17 L11.71 9.91 L12.82 15.33 L8.00 12.60 L3.18 15.33 L4.29 9.91 L0.20 6.17 L5.71 5.54 Z" fill="url(#starw)"/></svg><svg style="left:972px;top:497px" width="16" height="16" viewBox="0 0 16 16"><path d="M8.00 0.50 L10.29 5.54 L15.80 6.17 L11.71 9.91 L12.82 15.33 L8.00 12.60 L3.18 15.33 L4.29 9.91 L0.20 6.17 L5.71 5.54 Z" fill="url(#starw)"/></svg><svg style="left:988px;top:497px" width="16" height="16" viewBox="0 0 16 16"><path d="M8.00 0.50 L10.29 5.54 L15.80 6.17 L11.71 9.91 L12.82 15.33 L8.00 12.60 L3.18 15.33 L4.29 9.91 L0.20 6.17 L5.71 5.54 Z" fill="url(#starw)"/></svg><div class="t" style="left:1014px;top:498px;font-size:12px;color:#fff;font-weight:bold;">Security</div><div class="t" style="left:1124px;top:498px;width:540px;overflow:hidden;text-overflow:ellipsis;font-size:12px;font-weight:bold;color:#fff">Disable Tech Support Mode</div><div class="a" style="left:78px;top:524px;width:1590px;height:28px;background:linear-gradient(#cc7a0a,#bf7205 1px,#bf7205 27px,#c4780a)"></div><div class="a" style="left:78px;top:552px;width:1590px;height:2px;background:#02050a"></div><div class="a" style="left:84px;top:532px;width:11px;height:11px;border-radius:3px;background:linear-gradient(#fff,#f0f0f0);box-shadow:0 0 0 0.5px #999"></div><svg style="left:127px;top:527px" width="14" height="16" viewBox="0 0 14 16"><defs><linearGradient id="fl127_527" x1="0" y1="0" x2="1" y2="0"><stop offset="0" stop-color="#1e6a08"/><stop offset="0.35" stop-color="#6cc81c"/><stop offset="0.55" stop-color="#c8f890"/><stop offset="0.7" stop-color="#6cc81c"/><stop offset="1" stop-color="#1e6a08"/></linearGradient></defs><path d="M0 15.6 H14" stroke="#000" stroke-width="1" opacity="0.18"/><path d="M4.6 0.3 L1 15.3" stroke="#0d0f12" stroke-width="1.7" stroke-linecap="round"/><path d="M4.8 1.9 Q7.5 2.8 9.7 4.2 L13.6 5.1 L11.8 11.7 L8 11 Q5.5 10 3.7 8.5 Z" fill="url(#fl127_527)" stroke="#000" stroke-opacity="0.25" stroke-width="0.5"/></svg><svg style="left:169px;top:527px" width="8" height="15" viewBox="0 0 8 15"><rect x="0.2" y="0.3" width="6.4" height="12" rx="0.6" fill="url(#bg)"/><rect x="1.2" y="1.8" width="4.4" height="0.7" fill="#0f3a5c" opacity="0.6"/><rect x="1.2" y="9.3" width="4.4" height="0.6" fill="#0f3a5c" opacity="0.5"/><rect x="0.2" y="12.2" width="6.4" height="1.6" fill="#d8eef5" opacity="0.8"/></svg><div class="t" style="left:180px;top:533px;font-size:12px;color:#fff;font-weight:bold;">kuiper1.milky.way</div><div class="t" style="left:314px;top:528px;font-size:12px;color:#fff;font-weight:bold;">Host Console (HCN04)</div><div class="t" style="left:544px;top:528px;font-size:12px;color:#fff;font-weight:bold;">OPENED</div><div class="t" style="left:624px;top:528px;font-size:12px;color:#fff;font-weight:bold;">Warning</div><div class="t" style="left:685px;top:528px;font-size:12px;color:#fff;font-weight:bold;">16.09.2015 23:14:04</div><div class="t" style="left:805px;top:528px;font-size:12px;color:#fff;font-weight:bold;">17.09.2015 00:01:44</div><svg style="left:924px;top:527px" width="16" height="16" viewBox="0 0 16 16"><path d="M8.00 0.50 L10.29 5.54 L15.80 6.17 L11.71 9.91 L12.82 15.33 L8.00 12.60 L3.18 15.33 L4.29 9.91 L0.20 6.17 L5.71 5.54 Z" fill="url(#starw)"/></svg><svg style="left:940px;top:527px" width="16" height="16" viewBox="0 0 16 16"><path d="M8.00 0.50 L10.29 5.54 L15.80 6.17 L11.71 9.91 L12.82 15.33 L8.00 12.60 L3.18 15.33 L4.29 9.91 L0.20 6.17 L5.71 5.54 Z" fill="url(#starw)"/></svg><svg style="left:956px;top:527px" width="16" height="16" viewBox="0 0 16 16"><path d="M8.00 0.50 L10.29 5.54 L15.80 6.17 L11.71 9.91 L12.82 15.33 L8.00 12.60 L3.18 15.33 L4.29 9.91 L0.20 6.17 L5.71 5.54 Z" fill="url(#starw)"/></svg><svg style="left:972px;top:527px" width="16" height="16" viewBox="0 0 16 16"><path d="M8.00 0.50 L10.29 5.54 L15.80 6.17 L11.71 9.91 L12.82 15.33 L8.00 12.60 L3.18 15.33 L4.29 9.91 L0.20 6.17 L5.71 5.54 Z" fill="url(#starw)"/></svg><svg style="left:988px;top:527px" width="16" height="16" viewBox="0 0 16 16"><path d="M8.00 0.50 L10.29 5.54 L15.80 6.17 L11.71 9.91 L12.82 15.33 L8.00 12.60 L3.18 15.33 L4.29 9.91 L0.20 6.17 L5.71 5.54 Z" fill="url(#starw)"/></svg><div class="t" style="left:1014px;top:528px;font-size:12px;color:#fff;font-weight:bold;">Security</div><div class="t" style="left:1124px;top:528px;width:540px;overflow:hidden;text-overflow:ellipsis;font-size:12px;font-weight:bold;color:#fff">Disable Tech Support Mode</div><div class="a" style="left:78px;top:554px;width:1590px;height:28px;background:linear-gradient(#cc7a0a,#bf7205 1px,#bf7205 27px,#c4780a)"></div><div class="a" style="left:78px;top:582px;width:1590px;height:2px;background:#02050a"></div><div class="a" style="left:84px;top:562px;width:11px;height:11px;border-radius:3px;background:linear-gradient(#fff,#f0f0f0);box-shadow:0 0 0 0.5px #999"></div><svg style="left:127px;top:557px" width="14" height="16" viewBox="0 0 14 16"><defs><linearGradient id="fl127_557" x1="0" y1="0" x2="1" y2="0"><stop offset="0" stop-color="#1e6a08"/><stop offset="0.35" stop-color="#6cc81c"/><stop offset="0.55" stop-color="#c8f890"/><stop offset="0.7" stop-color="#6cc81c"/><stop offset="1" stop-color="#1e6a08"/></linearGradient></defs><path d="M0 15.6 H14" stroke="#000" stroke-width="1" opacity="0.18"/><path d="M4.6 0.3 L1 15.3" stroke="#0d0f12" stroke-width="1.7" stroke-linecap="round"/><path d="M4.8 1.9 Q7.5 2.8 9.7 4.2 L13.6 5.1 L11.8 11.7 L8 11 Q5.5 10 3.7 8.5 Z" fill="url(#fl127_557)" stroke="#000" stroke-opacity="0.25" stroke-width="0.5"/></svg><svg style="left:169px;top:557px" width="8" height="15" viewBox="0 0 8 15"><rect x="0.2" y="0.3" width="6.4" height="12" rx="0.6" fill="url(#bg)"/><rect x="1.2" y="1.8" width="4.4" height="0.7" fill="#0f3a5c" opacity="0.6"/><rect x="1.2" y="9.3" width="4.4" height="0.6" fill="#0f3a5c" opacity="0.5"/><rect x="0.2" y="12.2" width="6.4" height="1.6" fill="#d8eef5" opacity="0.8"/></svg><div class="t" style="left:180px;top:563px;font-size:12px;color:#fff;font-weight:bold;">kuiper1.milky.way</div><div class="t" style="left:314px;top:558px;font-size:12px;color:#fff;font-weight:bold;">vHBA/PCI Devices stop responding</div><div class="t" style="left:544px;top:558px;font-size:12px;color:#fff;font-weight:bold;">OPENED</div><div class="t" style="left:624px;top:558px;font-size:12px;color:#fff;font-weight:bold;">Warning</div><div class="t" style="left:685px;top:558px;font-size:12px;color:#fff;font-weight:bold;">16.09.2015 23:14:04</div><div class="t" style="left:805px;top:558px;font-size:12px;color:#fff;font-weight:bold;">17.09.2015 00:01:44</div><svg style="left:924px;top:557px" width="16" height="16" viewBox="0 0 16 16"><path d="M8.00 0.50 L10.29 5.54 L15.80 6.17 L11.71 9.91 L12.82 15.33 L8.00 12.60 L3.18 15.33 L4.29 9.91 L0.20 6.17 L5.71 5.54 Z" fill="url(#starw)"/><clipPath id="c924_557"><rect x="0" y="0" width="16" height="16"/></clipPath><path d="M8.00 0.50 L10.29 5.54 L15.80 6.17 L11.71 9.91 L12.82 15.33 L8.00 12.60 L3.18 15.33 L4.29 9.91 L0.20 6.17 L5.71 5.54 Z" fill="url(#star)" clip-path="url(#c924_557)"/></svg><svg style="left:940px;top:557px" width="16" height="16" viewBox="0 0 16 16"><path d="M8.00 0.50 L10.29 5.54 L15.80 6.17 L11.71 9.91 L12.82 15.33 L8.00 12.60 L3.18 15.33 L4.29 9.91 L0.20 6.17 L5.71 5.54 Z" fill="url(#starw)"/><clipPath id="c940_557"><rect x="0" y="0" width="16" height="16"/></clipPath><path d="M8.00 0.50 L10.29 5.54 L15.80 6.17 L11.71 9.91 L12.82 15.33 L8.00 12.60 L3.18 15.33 L4.29 9.91 L0.20 6.17 L5.71 5.54 Z" fill="url(#star)" clip-path="url(#c940_557)"/></svg><svg style="left:956px;top:557px" width="16" height="16" viewBox="0 0 16 16"><path d="M8.00 0.50 L10.29 5.54 L15.80 6.17 L11.71 9.91 L12.82 15.33 L8.00 12.60 L3.18 15.33 L4.29 9.91 L0.20 6.17 L5.71 5.54 Z" fill="url(#starw)"/><clipPath id="c956_557"><rect x="0" y="0" width="16" height="16"/></clipPath><path d="M8.00 0.50 L10.29 5.54 L15.80 6.17 L11.71 9.91 L12.82 15.33 L8.00 12.60 L3.18 15.33 L4.29 9.91 L0.20 6.17 L5.71 5.54 Z" fill="url(#star)" clip-path="url(#c956_557)"/></svg><svg style="left:972px;top:557px" width="16" height="16" viewBox="0 0 16 16"><path d="M8.00 0.50 L10.29 5.54 L15.80 6.17 L11.71 9.91 L12.82 15.33 L8.00 12.60 L3.18 15.33 L4.29 9.91 L0.20 6.17 L5.71 5.54 Z" fill="url(#starw)"/><clipPath id="c972_557"><rect x="0" y="0" width="4.0" height="16"/></clipPath><path d="M8.00 0.50 L10.29 5.54 L15.80 6.17 L11.71 9.91 L12.82 15.33 L8.00 12.60 L3.18 15.33 L4.29 9.91 L0.20 6.17 L5.71 5.54 Z" fill="url(#star)" clip-path="url(#c972_557)"/></svg><svg style="left:988px;top:557px" width="16" height="16" viewBox="0 0 16 16"><path d="M8.00 0.50 L10.29 5.54 L15.80 6.17 L11.71 9.91 L12.82 15.33 L8.00 12.60 L3.18 15.33 L4.29 9.91 L0.20 6.17 L5.71 5.54 Z" fill="url(#starw)"/></svg><div class="t" style="left:1014px;top:558px;font-size:12px;color:#fff;font-weight:bold;">Log File</div><div class="t" style="left:1124px;top:558px;width:540px;overflow:hidden;text-overflow:ellipsis;font-size:12px;font-weight:bold;color:#fff">vHBAs and other PCI devices may stop responding in ESX/ESXi 4.1 and ESXi 5.0 when using certain drivers</div><div class="a" style="left:78px;top:584px;width:1590px;height:28px;background:linear-gradient(#cc7a0a,#bf7205 1px,#bf7205 27px,#c4780a)"></div><div class="a" style="left:78px;top:612px;width:1590px;height:2px;background:#02050a"></div><div class="a" style="left:84px;top:592px;width:11px;height:11px;border-radius:3px;background:linear-gradient(#fff,#f0f0f0);box-shadow:0 0 0 0.5px #999"></div><svg style="left:127px;top:587px" width="14" height="16" viewBox="0 0 14 16"><defs><linearGradient id="fl127_587" x1="0" y1="0" x2="1" y2="0"><stop offset="0" stop-color="#1e6a08"/><stop offset="0.35" stop-color="#6cc81c"/><stop offset="0.55" stop-color="#c8f890"/><stop offset="0.7" stop-color="#6cc81c"/><stop offset="1" stop-color="#1e6a08"/></linearGradient></defs><path d="M0 15.6 H14" stroke="#000" stroke-width="1" opacity="0.18"/><path d="M4.6 0.3 L1 15.3" stroke="#0d0f12" stroke-width="1.7" stroke-linecap="round"/><path d="M4.8 1.9 Q7.5 2.8 9.7 4.2 L13.6 5.1 L11.8 11.7 L8 11 Q5.5 10 3.7 8.5 Z" fill="url(#fl127_587)" stroke="#000" stroke-opacity="0.25" stroke-width="0.5"/></svg><svg style="left:169px;top:587px" width="8" height="15" viewBox="0 0 8 15"><rect x="0.2" y="0.3" width="6.4" height="12" rx="0.6" fill="url(#bg)"/><rect x="1.2" y="1.8" width="4.4" height="0.7" fill="#0f3a5c" opacity="0.6"/><rect x="1.2" y="9.3" width="4.4" height="0.6" fill="#0f3a5c" opacity="0.5"/><rect x="0.2" y="12.2" width="6.4" height="1.6" fill="#d8eef5" opacity="0.8"/></svg><div class="t" style="left:180px;top:593px;font-size:12px;color:#fff;font-weight:bold;">kuiper1.milky.way</div><div class="t" style="left:314px;top:588px;font-size:12px;color:#fff;font-weight:bold;">Host Console (Disable DCUI)</div><div class="t" style="left:544px;top:588px;font-size:12px;color:#fff;font-weight:bold;">OPENED</div><div class="t" style="left:624px;top:588px;font-size:12px;color:#fff;font-weight:bold;">Warning</div><div class="t" style="left:685px;top:588px;font-size:12px;color:#fff;font-weight:bold;">16.09.2015 23:14:04</div><div class="t" style="left:805px;top:588px;font-size:12px;color:#fff;font-weight:bold;">17.09.2015 00:01:44</div><svg style="left:924px;top:587px" width="16" height="16" viewBox="0 0 16 16"><path d="M8.00 0.50 L10.29 5.54 L15.80 6.17 L11.71 9.91 L12.82 15.33 L8.00 12.60 L3.18 15.33 L4.29 9.91 L0.20 6.17 L5.71 5.54 Z" fill="url(#starw)"/><clipPath id="c924_587"><rect x="0" y="0" width="16" height="16"/></clipPath><path d="M8.00 0.50 L10.29 5.54 L15.80 6.17 L11.71 9.91 L12.82 15.33 L8.00 12.60 L3.18 15.33 L4.29 9.91 L0.20 6.17 L5.71 5.54 Z" fill="url(#star)" clip-path="url(#c924_587)"/></svg><svg style="left:940px;top:587px" width="16" height="16" viewBox="0 0 16 16"><path d="M8.00 0.50 L10.29 5.54 L15.80 6.17 L11.71 9.91 L12.82 15.33 L8.00 12.60 L3.18 15.33 L4.29 9.91 L0.20 6.17 L5.71 5.54 Z" fill="url(#starw)"/><clipPath id="c940_587"><rect x="0" y="0" width="8.0" height="16"/></clipPath><path d="M8.00 0.50 L10.29 5.54 L15.80 6.17 L11.71 9.91 L12.82 15.33 L8.00 12.60 L3.18 15.33 L4.29 9.91 L0.20 6.17 L5.71 5.54 Z" fill="url(#star)" clip-path="url(#c940_587)"/></svg><svg style="left:956px;top:587px" width="16" height="16" viewBox="0 0 16 16"><path d="M8.00 0.50 L10.29 5.54 L15.80 6.17 L11.71 9.91 L12.82 15.33 L8.00 12.60 L3.18 15.33 L4.29 9.91 L0.20 6.17 L5.71 5.54 Z" fill="url(#starw)"/></svg><svg style="left:972px;top:587px" width="16" height="16" viewBox="0 0 16 16"><path d="M8.00 0.50 L10.29 5.54 L15.80 6.17 L11.71 9.91 L12.82 15.33 L8.00 12.60 L3.18 15.33 L4.29 9.91 L0.20 6.17 L5.71 5.54 Z" fill="url(#starw)"/></svg><svg style="left:988px;top:587px" width="16" height="16" viewBox="0 0 16 16"><path d="M8.00 0.50 L10.29 5.54 L15.80 6.17 L11.71 9.91 L12.82 15.33 L8.00 12.60 L3.18 15.33 L4.29 9.91 L0.20 6.17 L5.71 5.54 Z" fill="url(#starw)"/></svg><div class="t" style="left:1014px;top:588px;font-size:12px;color:#fff;font-weight:bold;">Security</div><div class="t" style="left:1124px;top:588px;width:540px;overflow:hidden;text-overflow:ellipsis;font-size:12px;font-weight:bold;color:#fff">Disable DCUI to prevent all local administrative control.</div><div class="a" style="left:78px;top:614px;width:1590px;height:28px;background:linear-gradient(#cc7a0a,#bf7205 1px,#bf7205 27px,#c4780a)"></div><div class="a" style="left:78px;top:642px;width:1590px;height:2px;background:#02050a"></div><div class="a" style="left:84px;top:622px;width:11px;height:11px;border-radius:3px;background:linear-gradient(#fff,#f0f0f0);box-shadow:0 0 0 0.5px #999"></div><svg style="left:127px;top:617px" width="14" height="16" viewBox="0 0 14 16"><defs><linearGradient id="fl127_617" x1="0" y1="0" x2="1" y2="0"><stop offset="0" stop-color="#1e6a08"/><stop offset="0.35" stop-color="#6cc81c"/><stop offset="0.55" stop-color="#c8f890"/><stop offset="0.7" stop-color="#6cc81c"/><stop offset="1" stop-color="#1e6a08"/></linearGradient></defs><path d="M0 15.6 H14" stroke="#000" stroke-width="1" opacity="0.18"/><path d="M4.6 0.3 L1 15.3" stroke="#0d0f12" stroke-width="1.7" stroke-linecap="round"/><path d="M4.8 1.9 Q7.5 2.8 9.7 4.2 L13.6 5.1 L11.8 11.7 L8 11 Q5.5 10 3.7 8.5 Z" fill="url(#fl127_617)" stroke="#000" stroke-opacity="0.25" stroke-width="0.5"/></svg><svg style="left:169px;top:617px" width="8" height="15" viewBox="0 0 8 15"><rect x="0.2" y="0.3" width="6.4" height="12" rx="0.6" fill="url(#bg)"/><rect x="1.2" y="1.8" width="4.4" height="0.7" fill="#0f3a5c" opacity="0.6"/><rect x="1.2" y="9.3" width="4.4" height="0.6" fill="#0f3a5c" opacity="0.5"/><rect x="0.2" y="12.2" width="6.4" height="1.6" fill="#d8eef5" opacity="0.8"/></svg><div class="t" style="left:180px;top:623px;font-size:12px;color:#fff;font-weight:bold;">kuiper2.milky.way</div><div class="t" style="left:314px;top:618px;font-size:12px;color:#fff;font-weight:bold;">Host Console (Disable DCUI)</div><div class="t" style="left:544px;top:618px;font-size:12px;color:#fff;font-weight:bold;">OPENED</div><div class="t" style="left:624px;top:618px;font-size:12px;color:#fff;font-weight:bold;">Warning</div><div class="t" style="left:685px;top:618px;font-size:12px;color:#fff;font-weight:bold;">16.09.2015 23:14:04</div><div class="t" style="left:805px;top:618px;font-size:12px;color:#fff;font-weight:bold;">17.09.2015 00:01:44</div><svg style="left:924px;top:617px" width="16" height="16" viewBox="0 0 16 16"><path d="M8.00 0.50 L10.29 5.54 L15.80 6.17 L11.71 9.91 L12.82 15.33 L8.00 12.60 L3.18 15.33 L4.29 9.91 L0.20 6.17 L5.71 5.54 Z" fill="url(#starw)"/><clipPath id="c924_617"><rect x="0" y="0" width="16" height="16"/></clipPath><path d="M8.00 0.50 L10.29 5.54 L15.80 6.17 L11.71 9.91 L12.82 15.33 L8.00 12.60 L3.18 15.33 L4.29 9.91 L0.20 6.17 L5.71 5.54 Z" fill="url(#star)" clip-path="url(#c924_617)"/></svg><svg style="left:940px;top:617px" width="16" height="16" viewBox="0 0 16 16"><path d="M8.00 0.50 L10.29 5.54 L15.80 6.17 L11.71 9.91 L12.82 15.33 L8.00 12.60 L3.18 15.33 L4.29 9.91 L0.20 6.17 L5.71 5.54 Z" fill="url(#starw)"/><clipPath id="c940_617"><rect x="0" y="0" width="8.0" height="16"/></clipPath><path d="M8.00 0.50 L10.29 5.54 L15.80 6.17 L11.71 9.91 L12.82 15.33 L8.00 12.60 L3.18 15.33 L4.29 9.91 L0.20 6.17 L5.71 5.54 Z" fill="url(#star)" clip-path="url(#c940_617)"/></svg><svg style="left:956px;top:617px" width="16" height="16" viewBox="0 0 16 16"><path d="M8.00 0.50 L10.29 5.54 L15.80 6.17 L11.71 9.91 L12.82 15.33 L8.00 12.60 L3.18 15.33 L4.29 9.91 L0.20 6.17 L5.71 5.54 Z" fill="url(#starw)"/></svg><svg style="left:972px;top:617px" width="16" height="16" viewBox="0 0 16 16"><path d="M8.00 0.50 L10.29 5.54 L15.80 6.17 L11.71 9.91 L12.82 15.33 L8.00 12.60 L3.18 15.33 L4.29 9.91 L0.20 6.17 L5.71 5.54 Z" fill="url(#starw)"/></svg><svg style="left:988px;top:617px" width="16" height="16" viewBox="0 0 16 16"><path d="M8.00 0.50 L10.29 5.54 L15.80 6.17 L11.71 9.91 L12.82 15.33 L8.00 12.60 L3.18 15.33 L4.29 9.91 L0.20 6.17 L5.71 5.54 Z" fill="url(#starw)"/></svg><div class="t" style="left:1014px;top:618px;font-size:12px;color:#fff;font-weight:bold;">Security</div><div class="t" style="left:1124px;top:618px;width:540px;overflow:hidden;text-overflow:ellipsis;font-size:12px;font-weight:bold;color:#fff">Disable DCUI to prevent all local administrative control.</div><div class="a" style="left:78px;top:644px;width:1590px;height:28px;background:linear-gradient(#cc7a0a,#bf7205 1px,#bf7205 27px,#c4780a)"></div><div class="a" style="left:78px;top:672px;width:1590px;height:2px;background:#02050a"></div><div class="a" style="left:84px;top:652px;width:11px;height:11px;border-radius:3px;background:linear-gradient(#fff,#f0f0f0);box-shadow:0 0 0 0.5px #999"></div><svg style="left:127px;top:647px" width="14" height="16" viewBox="0 0 14 16"><defs><linearGradient id="fl127_647" x1="0" y1="0" x2="1" y2="0"><stop offset="0" stop-color="#1e6a08"/><stop offset="0.35" stop-color="#6cc81c"/><stop offset="0.55" stop-color="#c8f890"/><stop offset="0.7" stop-color="#6cc81c"/><stop offset="1" stop-color="#1e6a08"/></linearGradient></defs><path d="M0 15.6 H14" stroke="#000" stroke-width="1" opacity="0.18"/><path d="M4.6 0.3 L1 15.3" stroke="#0d0f12" stroke-width="1.7" stroke-linecap="round"/><path d="M4.8 1.9 Q7.5 2.8 9.7 4.2 L13.6 5.1 L11.8 11.7 L8 11 Q5.5 10 3.7 8.5 Z" fill="url(#fl127_647)" stroke="#000" stroke-opacity="0.25" stroke-width="0.5"/></svg><svg style="left:169px;top:647px" width="8" height="15" viewBox="0 0 8 15"><rect x="0.2" y="0.3" width="6.4" height="12" rx="0.6" fill="url(#bg)"/><rect x="1.2" y="1.8" width="4.4" height="0.7" fill="#0f3a5c" opacity="0.6"/><rect x="1.2" y="9.3" width="4.4" height="0.6" fill="#0f3a5c" opacity="0.5"/><rect x="0.2" y="12.2" width="6.4" height="1.6" fill="#d8eef5" opacity="0.8"/></svg><div class="t" style="left:180px;top:653px;font-size:12px;color:#fff;font-weight:bold;">kuiper1.milky.way</div><div class="t" style="left:314px;top:648px;font-size:12px;color:#fff;font-weight:bold;">Virtual/Physical CPU Disproportionate</div><div class="t" style="left:544px;top:648px;font-size:12px;color:#fff;font-weight:bold;">OPENED</div><div class="t" style="left:624px;top:648px;font-size:12px;color:#fff;font-weight:bold;">Warning</div><div class="t" style="left:685px;top:648px;font-size:12px;color:#fff;font-weight:bold;">17.09.2015 00:01:43</div><div class="t" style="left:805px;top:648px;font-size:12px;color:#fff;font-weight:bold;">17.09.2015 01:01:56</div><svg style="left:924px;top:647px" width="16" height="16" viewBox="0 0 16 16"><path d="M8.00 0.50 L10.29 5.54 L15.80 6.17 L11.71 9.91 L12.82 15.33 L8.00 12.60 L3.18 15.33 L4.29 9.91 L0.20 6.17 L5.71 5.54 Z" fill="url(#starw)"/></svg><svg style="left:940px;top:647px" width="16" height="16" viewBox="0 0 16 16"><path d="M8.00 0.50 L10.29 5.54 L15.80 6.17 L11.71 9.91 L12.82 15.33 L8.00 12.60 L3.18 15.33 L4.29 9.91 L0.20 6.17 L5.71 5.54 Z" fill="url(#starw)"/></svg><svg style="left:956px;top:647px" width="16" height="16" viewBox="0 0 16 16"><path d="M8.00 0.50 L10.29 5.54 L15.80 6.17 L11.71 9.91 L12.82 15.33 L8.00 12.60 L3.18 15.33 L4.29 9.91 L0.20 6.17 L5.71 5.54 Z" fill="url(#starw)"/></svg><svg style="left:972px;top:647px" width="16" height="16" viewBox="0 0 16 16"><path d="M8.00 0.50 L10.29 5.54 L15.80 6.17 L11.71 9.91 L12.82 15.33 L8.00 12.60 L3.18 15.33 L4.29 9.91 L0.20 6.17 L5.71 5.54 Z" fill="url(#starw)"/></svg><svg style="left:988px;top:647px" width="16" height="16" viewBox="0 0 16 16"><path d="M8.00 0.50 L10.29 5.54 L15.80 6.17 L11.71 9.91 L12.82 15.33 L8.00 12.60 L3.18 15.33 L4.29 9.91 L0.20 6.17 L5.71 5.54 Z" fill="url(#starw)"/></svg><div class="t" style="left:1014px;top:648px;font-size:12px;color:#fff;font-weight:bold;">Configuration</div><div class="t" style="left:1124px;top:648px;width:540px;overflow:hidden;text-overflow:ellipsis;font-size:12px;font-weight:bold;color:#fff">Host 'kuiper1.milky.way' experiences 200% pCPu overcommitment</div><div class="a" style="left:78px;top:674px;width:1590px;height:28px;background:linear-gradient(#cc7a0a,#bf7205 1px,#bf7205 27px,#c4780a)"></div><div class="a" style="left:78px;top:702px;width:1590px;height:2px;background:#02050a"></div><div class="a" style="left:84px;top:682px;width:11px;height:11px;border-radius:3px;background:linear-gradient(#fff,#f0f0f0);box-shadow:0 0 0 0.5px #999"></div><svg style="left:127px;top:677px" width="14" height="16" viewBox="0 0 14 16"><defs><linearGradient id="fl127_677" x1="0" y1="0" x2="1" y2="0"><stop offset="0" stop-color="#1e6a08"/><stop offset="0.35" stop-color="#6cc81c"/><stop offset="0.55" stop-color="#c8f890"/><stop offset="0.7" stop-color="#6cc81c"/><stop offset="1" stop-color="#1e6a08"/></linearGradient></defs><path d="M0 15.6 H14" stroke="#000" stroke-width="1" opacity="0.18"/><path d="M4.6 0.3 L1 15.3" stroke="#0d0f12" stroke-width="1.7" stroke-linecap="round"/><path d="M4.8 1.9 Q7.5 2.8 9.7 4.2 L13.6 5.1 L11.8 11.7 L8 11 Q5.5 10 3.7 8.5 Z" fill="url(#fl127_677)" stroke="#000" stroke-opacity="0.25" stroke-width="0.5"/></svg><svg style="left:169px;top:677px" width="8" height="15" viewBox="0 0 8 15"><rect x="0.2" y="0.3" width="6.4" height="12" rx="0.6" fill="url(#bg)"/><rect x="1.2" y="1.8" width="4.4" height="0.7" fill="#0f3a5c" opacity="0.6"/><rect x="1.2" y="9.3" width="4.4" height="0.6" fill="#0f3a5c" opacity="0.5"/><rect x="0.2" y="12.2" width="6.4" height="1.6" fill="#d8eef5" opacity="0.8"/></svg><div class="t" style="left:180px;top:683px;font-size:12px;color:#fff;font-weight:bold;">kuiper2.milky.way</div><div class="t" style="left:314px;top:678px;font-size:12px;color:#fff;font-weight:bold;">LUN path counter is different</div><div class="t" style="left:544px;top:678px;font-size:12px;color:#fff;font-weight:bold;">OPENED</div><div class="t" style="left:624px;top:678px;font-size:12px;color:#fff;font-weight:bold;">Warning</div><div class="t" style="left:685px;top:678px;font-size:12px;color:#fff;font-weight:bold;">16.09.2015 23:14:04</div><div class="t" style="left:805px;top:678px;font-size:12px;color:#fff;font-weight:bold;">17.09.2015 00:01:44</div><svg style="left:924px;top:677px" width="16" height="16" viewBox="0 0 16 16"><path d="M8.00 0.50 L10.29 5.54 L15.80 6.17 L11.71 9.91 L12.82 15.33 L8.00 12.60 L3.18 15.33 L4.29 9.91 L0.20 6.17 L5.71 5.54 Z" fill="url(#starw)"/></svg><svg style="left:940px;top:677px" width="16" height="16" viewBox="0 0 16 16"><path d="M8.00 0.50 L10.29 5.54 L15.80 6.17 L11.71 9.91 L12.82 15.33 L8.00 12.60 L3.18 15.33 L4.29 9.91 L0.20 6.17 L5.71 5.54 Z" fill="url(#starw)"/></svg><svg style="left:956px;top:677px" width="16" height="16" viewBox="0 0 16 16"><path d="M8.00 0.50 L10.29 5.54 L15.80 6.17 L11.71 9.91 L12.82 15.33 L8.00 12.60 L3.18 15.33 L4.29 9.91 L0.20 6.17 L5.71 5.54 Z" fill="url(#starw)"/></svg><svg style="left:972px;top:677px" width="16" height="16" viewBox="0 0 16 16"><path d="M8.00 0.50 L10.29 5.54 L15.80 6.17 L11.71 9.91 L12.82 15.33 L8.00 12.60 L3.18 15.33 L4.29 9.91 L0.20 6.17 L5.71 5.54 Z" fill="url(#starw)"/></svg><svg style="left:988px;top:677px" width="16" height="16" viewBox="0 0 16 16"><path d="M8.00 0.50 L10.29 5.54 L15.80 6.17 L11.71 9.91 L12.82 15.33 L8.00 12.60 L3.18 15.33 L4.29 9.91 L0.20 6.17 L5.71 5.54 Z" fill="url(#starw)"/></svg><div class="t" style="left:1014px;top:678px;font-size:12px;color:#fff;font-weight:bold;">Configuration</div><div class="t" style="left:1124px;top:678px;width:540px;overflow:hidden;text-overflow:ellipsis;font-size:12px;font-weight:bold;color:#fff">The path counter of the LUN 'naa.600140523c58404ddf48d3623d9002dc' connected to the host has changed</div><div class="a" style="left:78px;top:854px;width:1590px;height:1px;background:#0c0e12"></div><div class="a" style="left:78px;top:855px;width:1590px;height:29px;background:#2c2f40"></div><svg style="left:88px;top:864px" width="12" height="12" viewBox="0 0 12 12"><rect x="0.5" y="0.5" width="1.8" height="11" fill="#8b8e99"/><path d="M11 0.5 V11.5 L3.5 6 Z" fill="#8b8e99"/></svg><svg style="left:119px;top:864px" width="8" height="12" viewBox="0 0 8 12"><path d="M7 0.5 V11.5 L0.5 6 Z" fill="#8b8e99"/></svg><div class="a" style="left:142px;top:861px;width:1px;height:18px;background:#1b1e28"></div><div class="a" style="left:143px;top:861px;width:1px;height:18px;background:#3d4152"></div><div class="t" style="left:146px;top:863px;font-size:14px;color:#fff;">Page</div><div class="a" style="left:179px;top:860px;width:34px;height:20px;background:#fff"></div><div class="t" style="left:181px;top:863px;font-size:14px;color:#000;">1</div><div class="t" style="left:213px;top:863px;font-size:14px;color:#fff;">of 1</div><div class="a" style="left:241px;top:861px;width:1px;height:18px;background:#1b1e28"></div><div class="a" style="left:242px;top:861px;width:1px;height:18px;background:#3d4152"></div><svg style="left:253px;top:864px" width="8" height="12" viewBox="0 0 8 12"><path d="M1 0.5 V11.5 L7.5 6 Z" fill="#8b8e99"/></svg><svg style="left:281px;top:864px" width="12" height="12" viewBox="0 0 12 12"><path d="M1 0.5 V11.5 L8.5 6 Z" fill="#8b8e99"/><rect x="9.7" y="0.5" width="1.8" height="11" fill="#8b8e99"/></svg><div class="a" style="left:306px;top:861px;width:1px;height:18px;background:#1b1e28"></div><div class="a" style="left:307px;top:861px;width:1px;height:18px;background:#3d4152"></div><svg style="left:315px;top:862px" width="16" height="16" viewBox="0 0 16 16"><path d="M2.5 7 A5.5 5.5 0 0 1 12.5 4.5" fill="none" stroke="#2b8ae8" stroke-width="2.2"/><path d="M10 1.5 L15 3.5 L11.5 7.5 Z" fill="#2b8ae8"/><path d="M13.5 9 A5.5 5.5 0 0 1 3.5 11.5" fill="none" stroke="#2b8ae8" stroke-width="2.2"/><path d="M6 14.5 L1 12.5 L4.5 8.5 Z" fill="#2b8ae8"/></svg><div class="a" style="left:342px;top:861px;width:1px;height:18px;background:#1b1e28"></div><div class="a" style="left:343px;top:861px;width:1px;height:18px;background:#3d4152"></div><div class="t" style="left:345px;top:863px;font-size:14px;color:#fff;">Lines per Page:</div><div class="a" style="left:445px;top:860px;width:79px;height:21px;background:#5b6070;border-radius:2px"></div><div class="a" style="left:447px;top:862px;width:57px;height:17px;background:#26272c"></div><div class="a" style="left:505px;top:862px;width:17px;height:17px;background:#1c2130"></div><svg style="left:507px;top:868px" width="12" height="9" viewBox="0 0 12 9"><path d="M0 2.6 L2.6 0 L6 2.8 L9.4 0 L12 2.6 L6 8.3 Z" fill="#f0f0f0"/></svg><div class="t" style="left:449px;top:863px;font-size:14px;color:#fff;">50</div><div class="a" style="left:527px;top:861px;width:1px;height:18px;background:#1b1e28"></div><div class="a" style="left:528px;top:861px;width:1px;height:18px;background:#3d4152"></div><svg style="left:537px;top:862px" width="15" height="15" viewBox="0 0 15 15"><rect x="0" y="0" width="14.5" height="15" rx="0.8" fill="#e9eff0"/><g fill="#0f2f7a"><path d="M1 1 H5 L3.8 2.6 L5.2 4 L4 5.2 L2.6 3.8 L1 5 Z"/><path d="M13.5 1 H9.5 L10.7 2.6 L9.3 4 L10.5 5.2 L11.9 3.8 L13.5 5 Z"/><path d="M1 14 H5 L3.8 12.4 L5.2 11 L4 9.8 L2.6 11.2 L1 10 Z"/><path d="M13.5 14 H9.5 L10.7 12.4 L9.3 11 L10.5 9.8 L11.9 11.2 L13.5 10 Z"/></g></svg><div class="t" style="left:1365px;top:863px;width:300px;text-align:right;font-size:14px;color:#fff">Displaying 1 - 13 of 13</div><div class="a" style="left:77px;top:884px;width:1593px;height:1px;background:#0c0e12"></div><div class="a" style="left:1407px;top:1284px;width:250px;height:34px;border-radius:4px 4px 0 0;background:#4b8dc5"></div><div class="t" style="left:1417px;top:1294px;font-size:14px;color:#fff;">Contact us!</div><svg style="left:1592px;top:1294px" width="60" height="14" viewBox="0 0 60 14"><path d="M2 9.5 L7 4.5 L12 9.5" fill="none" stroke="#fff" stroke-width="2"/><path d="M22 2.5 L31 11.5 M31 2.5 L22 11.5" stroke="#fff" stroke-width="2"/><path d="M42 12 L51.5 2.5 M44.5 2.5 H51.5 V9.5" fill="none" stroke="#fff" stroke-width="2"/></svg></body></html>
